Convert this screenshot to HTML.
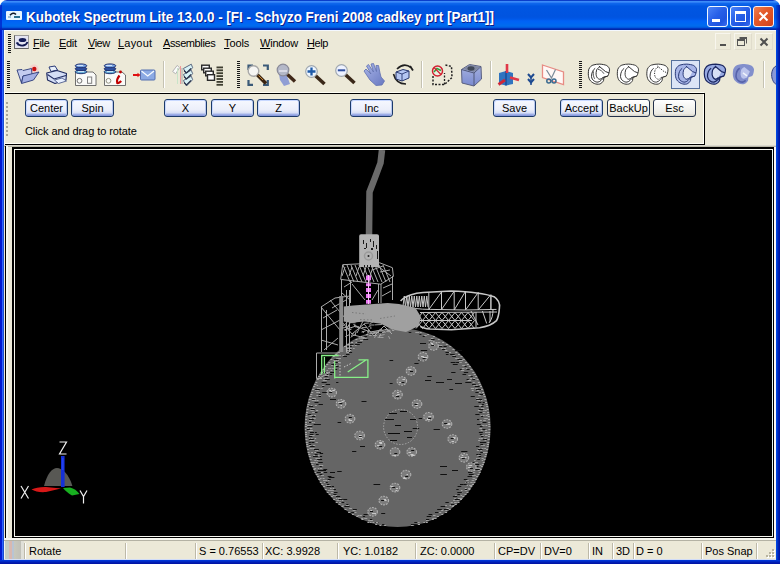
<!DOCTYPE html>
<html><head><meta charset="utf-8">
<style>
*{margin:0;padding:0;box-sizing:border-box}
html,body{width:780px;height:564px;overflow:hidden;background:#fff}
body{position:relative;font-family:"Liberation Sans",sans-serif;font-size:11px;color:#000}
.a{position:absolute}
#title{left:0;top:0;width:780px;height:30px;border-radius:7px 7px 0 0;
background:linear-gradient(to bottom,#0A3ECB 0px,#0A3ECB 1px,#3B8CF8 1px,#3B8CF8 2px,#2C7DF5 2px,#2C7DF5 3px,#1268EC 3px,#0660E8 5px,#0056E2 6px,#0054E0 17px,#0058E8 19px,#0062F6 21px,#0066F4 23px,#006CEE 26px,#0060E4 27px,#0050D8 28px,#0036C0 28px,#0036C0 29px,#0028A8 29px,#0028A8 30px)}
#ttext{left:26px;top:9px;color:#fff;font-weight:bold;font-size:14px;transform:scaleX(0.961);transform-origin:0 0;white-space:nowrap;text-shadow:1px 1px 0 #0A1E8A;line-height:16px}
#fl{left:0;top:30px;width:4px;height:534px;background:linear-gradient(to right,#0019D0 0,#0019D0 2px,#2D64FF 2px,#2D64FF 3px,#1A4CD0 3px)}
#fr{left:776px;top:30px;width:4px;height:534px;background:linear-gradient(to right,#0048E8 0,#0040D8 1px,#0028B8 2px,#0010A0 4px)}
#fb{left:0;top:560px;width:780px;height:4px;background:linear-gradient(to bottom,#0038D8 0,#0030D0 1px,#0020B8 2px,#0010A0 4px)}
#client{left:4px;top:30px;width:772px;height:530px;background:#ECE9D8}
.grip{background:repeating-linear-gradient(to bottom,#1a1a1a 0,#1a1a1a 1px,transparent 1px,transparent 2px)}
.mi{top:37px;line-height:13px;white-space:nowrap}
.mi u{text-decoration:underline;text-decoration-thickness:1px;text-underline-offset:1px}
.btn{height:18px;width:43px;border:1px solid #1C3A6A;border-radius:3px;text-align:center;line-height:16px;
background:linear-gradient(to bottom,#F6F8FF 0,#ECEFFA 60%,#D8DFF6 80%,#9FB0E8 90%,#8090D8 100%);box-shadow:inset 1px 1px 0 #C8D8FF,inset -1px 0 0 #B8C8F0}
.btn.p{background:linear-gradient(to bottom,#FFFFFF 0,#F4F4F0 50%,#ECEBE4 85%,#D8D4C8 100%);box-shadow:none;border-color:#22304A}
.sb{top:545px;line-height:13px;white-space:nowrap}
.sep{top:543px;width:2px;height:16px;background:linear-gradient(to right,#BDB9A8 0,#BDB9A8 1px,#FFFFFF 1px)}
</style></head><body>
<div id="title" class="a"></div>
<div id="ttext" class="a">Kubotek Spectrum Lite 13.0.0 - [FI - Schyzo Freni 2008 cadkey prt [Part1]]</div>

<!-- title icon -->
<svg class="a" style="left:6px;top:11px" width="16" height="9" viewBox="0 0 16 9">
<rect x="0" y="0" width="16" height="9" rx="1" fill="#E8F6FF"/>
<path d="M4 4.2Q7 0.8 10 3.5" stroke="#101828" stroke-width="1.6" fill="none"/>
<rect x="8" y="5" width="6" height="2" fill="#2A7090"/>
<rect x="2" y="5.5" width="3" height="1" fill="#5A90B0"/>
</svg>
<!-- title buttons -->
<div class="a" style="left:707px;top:6px;width:21px;height:21px;border:1px solid #F0F8FF;border-radius:3px;background:linear-gradient(135deg,#4C84F8 0%,#2860E8 45%,#1F55E0 75%,#3A6CF0 100%)"></div>
<div class="a" style="left:712px;top:19px;width:8px;height:3px;background:#fff"></div>
<div class="a" style="left:730px;top:6px;width:21px;height:21px;border:1px solid #F0F8FF;border-radius:3px;background:linear-gradient(135deg,#4C84F8 0%,#2860E8 45%,#1F55E0 75%,#3A6CF0 100%)"></div>
<div class="a" style="left:735px;top:11px;width:11px;height:11px;border:1px solid #fff;border-top-width:3px"></div>
<div class="a" style="left:753px;top:6px;width:21px;height:21px;border:1px solid #F8F0F0;border-radius:3px;background:linear-gradient(135deg,#F08050 0%,#E45A2A 40%,#D84A20 80%,#C84020 100%)"></div>
<svg class="a" style="left:758px;top:11px" width="11" height="11" viewBox="0 0 11 11">
<path d="M1.5 1.5L9.5 9.5M9.5 1.5L1.5 9.5" stroke="#FFF" stroke-width="2"/>
</svg>
<div class="a" style="left:0;top:5px;width:2px;height:25px;background:#0020C8;opacity:0.7"></div>
<div class="a" style="left:776px;top:5px;width:4px;height:25px;background:linear-gradient(to right,rgba(0,40,200,0.3),rgba(0,16,160,0.85))"></div>
<div id="fl" class="a"></div><div id="fr" class="a"></div><div id="fb" class="a"></div>
<div id="client" class="a"></div>

<!-- client top highlight -->
<div class="a" style="left:4px;top:30px;width:772px;height:1px;background:#F4F8FF"></div>
<!-- menu grip -->
<div class="a grip" style="left:8px;top:34px;width:3px;height:19px"></div>
<!-- menu icon -->
<svg class="a" style="left:14px;top:35px" width="15" height="14" viewBox="0 0 15 14">
<rect x="0.5" y="0.5" width="14" height="13" fill="#E4E4F2" stroke="#9A9A9A"/>
<path d="M0.5 0.5V13.5H14.5" fill="none" stroke="#606060"/>
<ellipse cx="8.5" cy="5" rx="3.8" ry="2" fill="#141C58"/>
<path d="M2.5 7.5Q5 11 9 10.5Q12.5 10 13.5 7" fill="none" stroke="#101850" stroke-width="1.8"/>
<path d="M3 9.5L4.5 10.5M3.5 7.5L5 8.5" stroke="#303870" stroke-width="1"/>
</svg>
<div class="a mi" style="left:33px;letter-spacing:-0.3px"><u>F</u>ile</div>
<div class="a mi" style="left:59px;letter-spacing:-0.3px"><u>E</u>dit</div>
<div class="a mi" style="left:88px;letter-spacing:-0.5px"><u>V</u>iew</div>
<div class="a mi" style="left:118px;letter-spacing:0.2px"><u>L</u>ayout</div>
<div class="a mi" style="left:163px;letter-spacing:-0.4px"><u>A</u>ssemblies</div>
<div class="a mi" style="left:224px;letter-spacing:-0.1px"><u>T</u>ools</div>
<div class="a mi" style="left:260px;letter-spacing:-0.2px"><u>W</u>indow</div>
<div class="a mi" style="left:307px;letter-spacing:-0.4px"><u>H</u>elp</div>
<!-- MDI buttons -->
<div class="a" style="left:715px;top:33px;width:16px;height:17px;border:1px solid #F8F6EE;border-right-color:#E0DCCC;border-bottom-color:#E0DCCC"></div>
<div class="a" style="left:734px;top:33px;width:18px;height:17px;border:1px solid #F8F6EE;border-right-color:#E0DCCC;border-bottom-color:#E0DCCC"></div>
<div class="a" style="left:755px;top:33px;width:18px;height:17px;border:1px solid #F8F6EE;border-right-color:#E0DCCC;border-bottom-color:#E0DCCC"></div>
<div class="a" style="left:720px;top:44px;width:6px;height:2px;background:#505050"></div>
<svg class="a" style="left:737px;top:36px" width="11" height="11" viewBox="0 0 11 11">
<path d="M3 1.5H9.5V7.5M3 1V3" stroke="#555" stroke-width="1" fill="none"/>
<rect x="0.5" y="3.5" width="7" height="6" fill="none" stroke="#555" stroke-width="1"/>
<rect x="0.5" y="3" width="7" height="2" fill="#555"/>
<rect x="3" y="1" width="7" height="2" fill="#555"/>
</svg>
<svg class="a" style="left:759px;top:37px" width="10" height="10" viewBox="0 0 10 10">
<path d="M1.5 1.5L8.5 8.5M8.5 1.5L1.5 8.5" stroke="#505050" stroke-width="2"/>
</svg>
<svg class="a" style="left:0;top:56px" width="780" height="37" viewBox="0 56 780 37">
<defs>
<radialGradient id="rg1"><stop offset="0" stop-color="#C00000"/><stop offset="0.5" stop-color="#E04040"/><stop offset="1" stop-color="#F8C0C0" stop-opacity="0"/></radialGradient>
<linearGradient id="hand" x1="0" y1="0" x2="1" y2="1"><stop offset="0" stop-color="#A8B4E8"/><stop offset="1" stop-color="#6878C0"/></linearGradient>
<linearGradient id="cube" x1="0" y1="0" x2="0" y2="1"><stop offset="0" stop-color="#A8B4E0"/><stop offset="1" stop-color="#7A8AD0"/></linearGradient>
</defs>
<!-- folder -->
<circle cx="34" cy="69" r="4.5" fill="#F8C8C8" opacity="0.7"/><circle cx="34.3" cy="69" r="2.2" fill="#C81010"/>
<path d="M17 70L22 69.5L23 70.5L31.5 68.5L32 75L23 76L21.5 83Z" fill="#C4CCF0" stroke="#2A3A78" stroke-width="0.9" stroke-linejoin="round"/>
<path d="M23 76L39 72L33.5 80L21.5 83.5Z" fill="#A4B0E4" stroke="#2A3A78" stroke-width="0.9" stroke-linejoin="round"/>
<!-- printer -->
<path d="M49 67L55 66L57.5 70L51 71.5Z" fill="#E8F0FA" stroke="#2A3A78" stroke-width="1"/>
<path d="M46.7 73L57 70.5L66.5 73.5L66 80L55 83.5L47.5 80Z" fill="#D4DEF6" stroke="#1E2A60" stroke-width="1.1" stroke-linejoin="round"/>
<path d="M47.5 74.5L54 79L66 75.5" fill="none" stroke="#1E2A60" stroke-width="1.1"/>
<path d="M54.5 80L62 78L66.5 81L58.5 83.5Z" fill="#E8F0FF" stroke="#3A4A80" stroke-width="0.8"/>
<!-- doc db 1 -->
<path d="M75.5 85.5V72H93L96 75V85.5Z" fill="#FAFAF8" stroke="#606060" stroke-width="0.9"/>
<g stroke="#182868" stroke-width="0.9"><ellipse cx="81" cy="71.8" rx="5.8" ry="1.9" fill="#6AB0D8"/><ellipse cx="81" cy="68.8" rx="5.8" ry="1.9" fill="#2E50A0"/><ellipse cx="81" cy="65.8" rx="5.8" ry="1.9" fill="#78A4E4"/></g>
<path d="M77 65.5H83M78 71.5H84" stroke="#E8F4FF" stroke-width="0.8"/>
<circle cx="79.5" cy="80.8" r="2.4" fill="none" stroke="#707070" stroke-width="1"/>
<rect x="87.5" y="77" width="4.2" height="6.3" fill="none" stroke="#808080" stroke-width="1"/>
<!-- doc db 2 -->
<path d="M104.5 85.5V72H122L125.5 75V85.5Z" fill="#FAFAF8" stroke="#606060" stroke-width="0.9"/>
<g stroke="#182868" stroke-width="0.9"><ellipse cx="110" cy="71.8" rx="5.8" ry="1.9" fill="#6AB0D8"/><ellipse cx="110" cy="68.8" rx="5.8" ry="1.9" fill="#2E50A0"/><ellipse cx="110" cy="65.8" rx="5.8" ry="1.9" fill="#78A4E4"/></g>
<path d="M106 65.5H112M107 71.5H113" stroke="#E8F4FF" stroke-width="0.8"/>
<circle cx="108.5" cy="80.8" r="2.4" fill="none" stroke="#909080" stroke-width="1"/>
<circle cx="120.5" cy="72" r="1.4" fill="#C00000"/>
<path d="M119.5 75.5Q116 80 117.3 83Q119 83.5 121.2 81" fill="none" stroke="#C00000" stroke-width="2.2"/>
<!-- mail -->
<rect x="140.5" y="70" width="14.5" height="10" rx="1" fill="#8CAAE4" stroke="#5470B0" stroke-width="1"/>
<path d="M141.5 71L147.7 76L154 71" fill="none" stroke="#F8FCFF" stroke-width="1.2"/>
<path d="M133 75H138" stroke="#E01010" stroke-width="2"/>
<path d="M137.5 72.8L140.5 75L137.5 77.2Z" fill="#E01010"/>
<!-- checklist -->
<path d="M172.6 71.5L177.2 65.4L179.5 67.7L175.7 73.8Z" fill="#FAFAFA" stroke="#B4B4B4" stroke-width="1"/>
<path d="M177.5 68V84" stroke="#C8E4C8" stroke-width="1"/>
<path d="M180.5 66V84" stroke="#F09898" stroke-width="1"/>
<path d="M182 68V84" stroke="#A8A8A8" stroke-width="1"/>
<g fill="#D8F2F6" stroke="#5A6880" stroke-width="1" stroke-linejoin="round">
<path d="M183.4 68.5L191.3 64.2L192.6 67.7L186.5 74.2Z"/><path d="M183.4 74.5L191.3 70.2L192.6 73.7L186.5 80.2Z"/><path d="M183.4 80.5L191.3 76.2L192.6 79.7L186.5 86Z"/>
</g>
<path d="M184 70.5L186.5 73L191 68.5M184 76.5L186.5 79L191 74.5M184 82.5L186.5 85L191 80.5" fill="none" stroke="#283048" stroke-width="1.2"/>
<!-- layers -->
<g fill="#FCFCFC" stroke="#2A2A2A" stroke-width="1.4">
<rect x="201.7" y="65.2" width="7.6" height="4.6"/><rect x="203.7" y="68.2" width="7.6" height="4.6"/><rect x="205.7" y="71.2" width="7.6" height="4.6"/><rect x="207.5" y="74.7" width="7" height="5.6"/>
</g>
<g fill="#3E3E30"><rect x="216.5" y="66.5" width="6.5" height="1.8"/><rect x="216.5" y="69.4" width="6.5" height="1.8"/><rect x="216.5" y="72.3" width="6.5" height="1.8"/><rect x="216.5" y="75.2" width="6.5" height="1.8"/><rect x="216.5" y="78.1" width="6.5" height="1.8"/><rect x="216.5" y="81" width="6.5" height="1.8"/><rect x="216.5" y="83.9" width="6.5" height="1.8"/></g>
<!-- zoom window -->
<path d="M248.5 70V65.5H253M263 65.5H267.8V70M248.5 80V84.8H253M263 84.8H267.8V80" fill="none" stroke="#3A5A78" stroke-width="2.2"/>
<circle cx="253.5" cy="71" r="5.3" fill="#F6F6F4" stroke="#A8A8A8" stroke-width="1.4"/>
<path d="M257.5 75L266 83.5" stroke="#3A2410" stroke-width="3.6"/>
<path d="M258.5 75.5L263 80" stroke="#C88838" stroke-width="1"/>
<!-- zoom dyn -->
<path d="M279 74L286 73L290 84L284 86L280 80Z" fill="#8090D4" opacity="0.85"/>
<circle cx="283" cy="70" r="5.8" fill="#B4B8C8" stroke="#8A8A98" stroke-width="1.2"/>
<path d="M279 71H287" stroke="#F0F0F8" stroke-width="1.2"/>
<path d="M287.5 74.5L295 81.5" stroke="#402818" stroke-width="3.4"/>
<!-- zoom in -->
<circle cx="311.5" cy="71.5" r="5.8" fill="#EEF6FF" stroke="#A0A8B0" stroke-width="1.2"/>
<path d="M311.5 67.5V75.5M307.5 71.5H315.5" stroke="#1E5AA8" stroke-width="2.3"/>
<path d="M315.8 76L324.5 84" stroke="#3A2818" stroke-width="3.6"/>
<!-- zoom out -->
<circle cx="341.5" cy="70.5" r="5.8" fill="#EEF2FF" stroke="#A0A8B0" stroke-width="1.2"/>
<path d="M337.8 70.3H345.2" stroke="#3050A0" stroke-width="2"/>
<path d="M345.8 75L354.5 83" stroke="#3A2818" stroke-width="3.6"/>
<!-- hand -->
<path d="M364 71L366 69L371 74L366.5 66L368.5 64.5L373.5 72L371 64L373.5 63.5L376.5 71.5L376 65.5L378.5 65.5L380 73L381 77L384.5 81L382 85L376 85.5L370 80Z" fill="url(#hand)" stroke="#6070B0" stroke-width="0.8" stroke-linejoin="round"/>
<!-- rotate box -->
<path d="M397 69Q404 62 411 67.5" fill="none" stroke="#202020" stroke-width="1.6"/>
<path d="M410 66L413 70.5" stroke="#202020" stroke-width="1.8"/>
<path d="M393.5 74Q396 84 406 84" fill="none" stroke="#202020" stroke-width="1.6"/>
<path d="M396 72L403 69.5L409 71L409 78L402 81L396 79Z" fill="#B4C6F2" stroke="#283870" stroke-width="1"/>
<path d="M396 72L402 74L409 71M402 74V81" fill="none" stroke="#283870" stroke-width="0.9"/>
<!-- hidden box -->
<path d="M433 76V84.5H444.5L452 77.5L451.5 66.5L445 65" fill="none" stroke="#202020" stroke-width="1.5" stroke-dasharray="2 1.5"/>
<path d="M444.5 84.5V73" fill="none" stroke="#202020" stroke-width="1.3" stroke-dasharray="2 1.5"/>
<circle cx="437.5" cy="71" r="5" fill="#E8F0E0" stroke="#D02030" stroke-width="1.5"/>
<path d="M434 72L437 68.5L441 70.5" fill="none" stroke="#30A040" stroke-width="1.5"/>
<path d="M434 67.5L441 74.5" stroke="#D02030" stroke-width="1.3"/>
<!-- shaded box -->
<path d="M461.5 69.5L469.5 64.5L481 66.5L481.5 79L474 86L462 83Z" fill="url(#cube)" stroke="#5A6080" stroke-width="1"/>
<path d="M461.5 69.5L474 73L481 66.5M474 73V86" fill="none" stroke="#505878" stroke-width="1"/>
<path d="M463 69L470 65L480 67L474 72Z" fill="#8088A0"/>
<ellipse cx="471" cy="68.5" rx="3.5" ry="2.2" fill="#404858"/>
<!-- axes -->
<path d="M499 73L506 71L513 73V84L506 85.5L499 84Z" fill="#3074C0"/>
<path d="M506 71V85.5" stroke="#1A4E9A" stroke-width="1.5"/>
<path d="M507 64V73" stroke="#E03848" stroke-width="2.6"/>
<path d="M510 77.5L519 80" stroke="#E03848" stroke-width="2.6"/>
<path d="M505 80L498.5 84.5" stroke="#D02838" stroke-width="2.8"/>
<!-- small arrow -->
<path d="M528 74L531 77.5L534 74M528 79L531 82.5L534 79" fill="none" stroke="#1E4A90" stroke-width="2"/>
<path d="M531 76V85" stroke="#1E4A90" stroke-width="1.5"/>
<!-- plane -->
<path d="M542.5 65L563.5 72V84.5L542.5 77.5Z" fill="#FFF8F6" stroke="#E88C84" stroke-width="1.3"/>
<path d="M546.5 70L551.5 78L555.5 69.5" fill="none" stroke="#7A8A98" stroke-width="1.2"/>
<circle cx="548.8" cy="81" r="2" fill="none" stroke="#3A6A90" stroke-width="1.5"/>
<circle cx="554" cy="81" r="2" fill="none" stroke="#3A6A90" stroke-width="1.5"/>
<!-- torus icons -->
<g transform="translate(588.5,64.8)" stroke="#303030" stroke-width="1"><path d="M0.3 4.4C1.5 2 3 0.8 4.4 0.3C7 -0.5 9 -0.7 11.3 -0.7C14 -0.5 16.5 0 18.2 0.7C19.8 1.8 20.7 3 21 4.4C21 6 20.8 7 20.5 8.1C20.2 9.5 19.8 10.5 19.2 11.3L15.5 12.5L15 15.9C14 17.5 12.8 18.7 11.3 19.2C9.5 19.6 7.5 19.4 5.8 18.7C3.8 17.8 2.2 16.5 1.2 15C0.2 13 -0.2 11 -0.2 9C-0.2 7.3 0 5.8 0.3 4.4Z" fill="#FFFFFF"/><path d="M6.7 3.5C4.5 4.8 3 8 3 11.8C3.3 13.8 4 15 5.3 15.9C6.5 17 8 17.4 9.5 17.3C10.8 17 11.8 16.3 12.7 15.5" fill="none"/><path d="M11.3 2.1C9.5 3 8.5 4.2 8.1 5.3C7.6 7 7.5 8.5 7.6 9.9C7.9 11.5 8.3 12.5 9 13.2C9.7 14 10.5 14.4 11.3 14.5C12.5 14.3 13.3 13.6 14.1 12.7" fill="none"/><path d="M10.4 1.2L16.9 6.7L20.5 8.1M14.1 12.7L19.2 11.3M12.7 15.5L15.5 12.5" fill="none"/><path d="M5 6.5C4.5 9 4.8 12 6.2 14M9.5 4.5C12 5 14 6.5 15.5 9" fill="none" stroke-width="0.8"/></g>
<g transform="translate(617.5,64.8)" stroke="#383838" stroke-width="1"><path d="M0.3 4.4C1.5 2 3 0.8 4.4 0.3C7 -0.5 9 -0.7 11.3 -0.7C14 -0.5 16.5 0 18.2 0.7C19.8 1.8 20.7 3 21 4.4C21 6 20.8 7 20.5 8.1C20.2 9.5 19.8 10.5 19.2 11.3L15.5 12.5L15 15.9C14 17.5 12.8 18.7 11.3 19.2C9.5 19.6 7.5 19.4 5.8 18.7C3.8 17.8 2.2 16.5 1.2 15C0.2 13 -0.2 11 -0.2 9C-0.2 7.3 0 5.8 0.3 4.4Z" fill="#FFFFFF"/><path d="M6.7 3.5C4.5 4.8 3 8 3 11.8C3.3 13.8 4 15 5.3 15.9C6.5 17 8 17.4 9.5 17.3C10.8 17 11.8 16.3 12.7 15.5" fill="none"/><path d="M11.3 2.1C9.5 3 8.5 4.2 8.1 5.3C7.6 7 7.5 8.5 7.6 9.9C7.9 11.5 8.3 12.5 9 13.2C9.7 14 10.5 14.4 11.3 14.5C12.5 14.3 13.3 13.6 14.1 12.7" fill="none"/><path d="M10.4 1.2L16.9 6.7L20.5 8.1M14.1 12.7L19.2 11.3M12.7 15.5L15.5 12.5" fill="none"/></g>
<g transform="translate(647,64.8)" stroke="#383838" stroke-width="1"><path d="M0.3 4.4C1.5 2 3 0.8 4.4 0.3C7 -0.5 9 -0.7 11.3 -0.7C14 -0.5 16.5 0 18.2 0.7C19.8 1.8 20.7 3 21 4.4C21 6 20.8 7 20.5 8.1C20.2 9.5 19.8 10.5 19.2 11.3L15.5 12.5L15 15.9C14 17.5 12.8 18.7 11.3 19.2C9.5 19.6 7.5 19.4 5.8 18.7C3.8 17.8 2.2 16.5 1.2 15C0.2 13 -0.2 11 -0.2 9C-0.2 7.3 0 5.8 0.3 4.4Z" fill="#FFFFFF"/><path d="M6.7 3.5C4.5 4.8 3 8 3 11.8C3.3 13.8 4 15 5.3 15.9C6.5 17 8 17.4 9.5 17.3C10.8 17 11.8 16.3 12.7 15.5" fill="none"/><path d="M11.3 2.1C9.5 3 8.5 4.2 8.1 5.3C7.6 7 7.5 8.5 7.6 9.9C7.9 11.5 8.3 12.5 9 13.2C9.7 14 10.5 14.4 11.3 14.5C12.5 14.3 13.3 13.6 14.1 12.7" fill="none" stroke-dasharray="1.3 1.1"/><path d="M10.4 1.2L16.9 6.7L20.5 8.1M14.1 12.7L19.2 11.3M12.7 15.5L15.5 12.5" fill="none" stroke-dasharray="1.3 1.1"/></g>
<rect x="671.5" y="60.5" width="28" height="28" fill="#DCE5F6" stroke="#56709C" stroke-width="1"/>
<g transform="translate(675.5,64.8)" stroke="#2A3A78" stroke-width="1"><path d="M0.3 4.4C1.5 2 3 0.8 4.4 0.3C7 -0.5 9 -0.7 11.3 -0.7C14 -0.5 16.5 0 18.2 0.7C19.8 1.8 20.7 3 21 4.4C21 6 20.8 7 20.5 8.1C20.2 9.5 19.8 10.5 19.2 11.3L15.5 12.5L15 15.9C14 17.5 12.8 18.7 11.3 19.2C9.5 19.6 7.5 19.4 5.8 18.7C3.8 17.8 2.2 16.5 1.2 15C0.2 13 -0.2 11 -0.2 9C-0.2 7.3 0 5.8 0.3 4.4Z" fill="#A8B6E8"/><path d="M8.1 5.3C7.6 7 7.5 8.5 7.6 9.9C7.9 11.5 8.3 12.5 9 13.2C10 14.3 12 14 14.1 12.7L16.9 6.7L11.3 2.1C9.5 3 8.5 4.2 8.1 5.3Z" fill="#E4EAF8" stroke="none"/><path d="M6.7 3.5C4.5 4.8 3 8 3 11.8C3.3 13.8 4 15 5.3 15.9C6.5 17 8 17.4 9.5 17.3C10.8 17 11.8 16.3 12.7 15.5" fill="none"/><path d="M11.3 2.1C9.5 3 8.5 4.2 8.1 5.3C7.6 7 7.5 8.5 7.6 9.9C7.9 11.5 8.3 12.5 9 13.2C9.7 14 10.5 14.4 11.3 14.5C12.5 14.3 13.3 13.6 14.1 12.7" fill="none"/><path d="M10.4 1.2L16.9 6.7L20.5 8.1M14.1 12.7L19.2 11.3M12.7 15.5L15.5 12.5" fill="none"/></g>
<g transform="translate(704.5,64.8)" stroke="#1A2660" stroke-width="1.2"><path d="M0.3 4.4C1.5 2 3 0.8 4.4 0.3C7 -0.5 9 -0.7 11.3 -0.7C14 -0.5 16.5 0 18.2 0.7C19.8 1.8 20.7 3 21 4.4C21 6 20.8 7 20.5 8.1C20.2 9.5 19.8 10.5 19.2 11.3L15.5 12.5L15 15.9C14 17.5 12.8 18.7 11.3 19.2C9.5 19.6 7.5 19.4 5.8 18.7C3.8 17.8 2.2 16.5 1.2 15C0.2 13 -0.2 11 -0.2 9C-0.2 7.3 0 5.8 0.3 4.4Z" fill="#98AAE2"/><path d="M8.1 5.3C7.6 7 7.5 8.5 7.6 9.9C7.9 11.5 8.3 12.5 9 13.2C10 14.3 12 14 14.1 12.7L16.9 6.7L11.3 2.1C9.5 3 8.5 4.2 8.1 5.3Z" fill="#D8E0F6" stroke="none"/><path d="M6.7 3.5C4.5 4.8 3 8 3 11.8C3.3 13.8 4 15 5.3 15.9C6.5 17 8 17.4 9.5 17.3C10.8 17 11.8 16.3 12.7 15.5" fill="none"/><path d="M11.3 2.1C9.5 3 8.5 4.2 8.1 5.3C7.6 7 7.5 8.5 7.6 9.9C7.9 11.5 8.3 12.5 9 13.2C9.7 14 10.5 14.4 11.3 14.5C12.5 14.3 13.3 13.6 14.1 12.7" fill="none"/><path d="M10.4 1.2L16.9 6.7L20.5 8.1M14.1 12.7L19.2 11.3M12.7 15.5L15.5 12.5" fill="none"/></g>
<g transform="translate(733,64.8)" opacity="0.92"><path d="M0.3 4.4C1.5 2 3 0.8 4.4 0.3C7 -0.5 9 -0.7 11.3 -0.7C14 -0.5 16.5 0 18.2 0.7C19.8 1.8 20.7 3 21 4.4C21 6 20.8 7 20.5 8.1C20.2 9.5 19.8 10.5 19.2 11.3L15.5 12.5L15 15.9C14 17.5 12.8 18.7 11.3 19.2C9.5 19.6 7.5 19.4 5.8 18.7C3.8 17.8 2.2 16.5 1.2 15C0.2 13 -0.2 11 -0.2 9C-0.2 7.3 0 5.8 0.3 4.4Z" fill="#7A88CC"/><path d="M6.7 3.5C4.5 4.8 3 8 3 11.8C3.3 13.8 4 15 5.3 15.9C6.5 17 8 17.4 9.5 17.3C10.8 17 11.8 16.3 12.7 15.5" fill="none" stroke="#4A58A8" stroke-width="1.6"/><path d="M8.1 5.3C7.6 7 7.5 8.5 7.6 9.9C7.9 11.5 8.3 12.5 9 13.2C10 14.3 12 14 14.1 12.7L16.9 6.7L11.3 2.1C9.5 3 8.5 4.2 8.1 5.3Z" fill="#B8C2EE"/><path d="M10 8L14 11" stroke="#F0F4FF" stroke-width="1.5"/></g>
<path d="M776 66C772 68 771 74 772 78C773 82 775 84 776 84" fill="#8898D8" stroke="#304080" stroke-width="1"/>
</svg>

<!-- toolbar grip -->
<div class="a grip" style="left:7px;top:61px;width:3px;height:27px"></div>
<!-- toolbar separators -->
<div class="a" style="left:163px;top:61px;width:1px;height:27px;background:#C5C2B2"></div>
<div class="a" style="left:164px;top:61px;width:1px;height:27px;background:#FFFFFF"></div>
<div class="a grip" style="left:237px;top:61px;width:3px;height:27px"></div>
<div class="a" style="left:421px;top:61px;width:1px;height:27px;background:#C5C2B2"></div>
<div class="a" style="left:422px;top:61px;width:1px;height:27px;background:#FFFFFF"></div>
<div class="a" style="left:490px;top:61px;width:1px;height:27px;background:#C5C2B2"></div>
<div class="a" style="left:491px;top:61px;width:1px;height:27px;background:#FFFFFF"></div>
<div class="a grip" style="left:579px;top:61px;width:3px;height:27px"></div>
<div class="a" style="left:763px;top:61px;width:1px;height:27px;background:#C5C2B2"></div>
<div class="a" style="left:764px;top:61px;width:1px;height:27px;background:#FFFFFF"></div>
<!-- dialog bar -->
<div class="a" style="left:4px;top:92px;width:700px;height:1px;background:#FFFFF6"></div>
<div class="a" style="left:4px;top:93px;width:701px;height:52px;border:1px solid #000;border-left:none;border-bottom:1px solid #000"></div>
<div class="a" style="left:4px;top:94px;width:700px;height:50px;border-right:1px solid #FFFFF8;border-bottom:1px solid #FFFFF8"></div>
<div class="a" style="left:6px;top:102px;width:2px;height:34px;background:repeating-linear-gradient(to bottom,#A8A698 0,#A8A698 2px,transparent 2px,transparent 4px)"></div>
<div class="a" style="left:4px;top:31px;width:1px;height:114px;background:#FAFAF6"></div>
<div class="a btn" style="left:25px;top:99px">Center</div>
<div class="a btn" style="left:71px;top:99px">Spin</div>
<div class="a btn" style="left:164px;top:99px">X</div>
<div class="a btn" style="left:211px;top:99px">Y</div>
<div class="a btn" style="left:257px;top:99px">Z</div>
<div class="a btn" style="left:350px;top:99px">Inc</div>
<div class="a btn" style="left:493px;top:99px">Save</div>
<div class="a btn" style="left:560px;top:99px">Accept</div>
<div class="a btn p" style="left:607px;top:99px">BackUp</div>
<div class="a btn p" style="left:653px;top:99px">Esc</div>
<div class="a" style="left:25px;top:124px;line-height:14px;white-space:nowrap;letter-spacing:-0.08px">Click and drag to rotate</div>
<!-- mdi area edges -->
<div class="a" style="left:4px;top:145px;width:772px;height:1px;background:#DAD8CE"></div>
<div class="a" style="left:4px;top:146px;width:772px;height:1px;background:#BAB8A8"></div>
<div class="a" style="left:5px;top:146px;width:1px;height:393px;background:#000"></div>
<div class="a" style="left:6px;top:146px;width:2px;height:393px;background:#F6FAF2"></div>
<!-- viewport -->
<div class="a" style="left:12px;top:147px;width:762px;height:391px;background:#000"></div>
<div class="a" style="left:14px;top:149px;width:759px;height:388px;border:1px solid #F6F6F0;border-right-color:#E8F8F8"></div>
<div class="a" style="left:774px;top:147px;width:2px;height:393px;background:#FCF6F4"></div>
<div class="a" style="left:4px;top:538px;width:772px;height:2px;background:#F8F8F2"></div>
<!--VP--><svg class="a" style="left:15px;top:150px" width="757" height="386" viewBox="15 150 757 386">
<ellipse cx="397.6" cy="427.5" rx="93" ry="99.5" fill="#656565"/>
<path d="M384.7 329.5h2.0" stroke="#A8A8A8" stroke-width="1"/>
<path d="M388.5 330.5h1.9" stroke="#A0A0A0" stroke-width="1"/>
<path d="M392.0 330.5h2.3" stroke="#A0A0A0" stroke-width="1"/>
<path d="M393.0 329.5h3.6" stroke="#121212" stroke-width="1"/>
<path d="M394.9 329.5h4.3" stroke="#121212" stroke-width="1"/>
<path d="M408.5 329.5h2.0" stroke="#A8A8A8" stroke-width="1"/>
<path d="M401.6 330.5h2.4" stroke="#A0A0A0" stroke-width="1"/>
<path d="M405.8 330.5h2.0" stroke="#A0A0A0" stroke-width="1"/>
<path d="M402.7 329.5h3.6" stroke="#121212" stroke-width="1"/>
<path d="M373.5 332.5h2.0" stroke="#A8A8A8" stroke-width="1"/>
<path d="M381.0 332.5h1.9" stroke="#A0A0A0" stroke-width="1"/>
<path d="M376.6 332.5h2.4" stroke="#A0A0A0" stroke-width="1"/>
<path d="M379.0 332.5h4.3" stroke="#121212" stroke-width="1"/>
<path d="M419.7 332.5h2.0" stroke="#A8A8A8" stroke-width="1"/>
<path d="M416.9 332.5h2.1" stroke="#A0A0A0" stroke-width="1"/>
<path d="M417.0 332.5h1.5" stroke="#A0A0A0" stroke-width="1"/>
<path d="M408.7 332.5h2.6" stroke="#121212" stroke-width="1"/>
<path d="M382.0 332.5h2.7" stroke="#9C9C9C" stroke-width="1"/>
<path d="M415.3 332.5h2.9" stroke="#9C9C9C" stroke-width="1"/>
<path d="M366.1 334.5h2.0" stroke="#A8A8A8" stroke-width="1"/>
<path d="M374.8 335.5h2.1" stroke="#A0A0A0" stroke-width="1"/>
<path d="M369.2 335.5h2.5" stroke="#A0A0A0" stroke-width="1"/>
<path d="M369.8 334.5h4.9" stroke="#121212" stroke-width="1"/>
<path d="M371.6 334.5h2.1" stroke="#121212" stroke-width="1"/>
<path d="M427.1 334.5h2.0" stroke="#A8A8A8" stroke-width="1"/>
<path d="M424.1 335.5h1.6" stroke="#A0A0A0" stroke-width="1"/>
<path d="M424.9 335.5h1.8" stroke="#A0A0A0" stroke-width="1"/>
<path d="M419.4 334.5h2.0" stroke="#121212" stroke-width="1"/>
<path d="M360.3 336.5h2.0" stroke="#A8A8A8" stroke-width="1"/>
<path d="M362.5 338.5h1.9" stroke="#A0A0A0" stroke-width="1"/>
<path d="M364.4 338.5h2.2" stroke="#A0A0A0" stroke-width="1"/>
<path d="M363.8 336.5h3.4" stroke="#121212" stroke-width="1"/>
<path d="M432.9 336.5h2.0" stroke="#A8A8A8" stroke-width="1"/>
<path d="M430.8 338.5h2.5" stroke="#A0A0A0" stroke-width="1"/>
<path d="M431.0 338.5h2.2" stroke="#A0A0A0" stroke-width="1"/>
<path d="M422.7 336.5h2.1" stroke="#121212" stroke-width="1"/>
<path d="M355.4 339.5h2.0" stroke="#A8A8A8" stroke-width="1"/>
<path d="M360.1 340.5h2.3" stroke="#A0A0A0" stroke-width="1"/>
<path d="M360.7 340.5h2.2" stroke="#A0A0A0" stroke-width="1"/>
<path d="M363.3 339.5h4.9" stroke="#121212" stroke-width="1"/>
<path d="M437.8 339.5h2.0" stroke="#A8A8A8" stroke-width="1"/>
<path d="M430.1 340.5h2.4" stroke="#A0A0A0" stroke-width="1"/>
<path d="M428.6 340.5h1.8" stroke="#A0A0A0" stroke-width="1"/>
<path d="M431.0 339.5h3.6" stroke="#121212" stroke-width="1"/>
<path d="M351.1 342.5h2.0" stroke="#A8A8A8" stroke-width="1"/>
<path d="M357.5 342.5h2.3" stroke="#A0A0A0" stroke-width="1"/>
<path d="M355.8 342.5h1.8" stroke="#A0A0A0" stroke-width="1"/>
<path d="M357.2 342.5h4.9" stroke="#121212" stroke-width="1"/>
<path d="M442.1 342.5h2.0" stroke="#A8A8A8" stroke-width="1"/>
<path d="M437.6 342.5h2.1" stroke="#A0A0A0" stroke-width="1"/>
<path d="M433.0 342.5h1.8" stroke="#A0A0A0" stroke-width="1"/>
<path d="M429.5 342.5h3.6" stroke="#121212" stroke-width="1"/>
<path d="M355.7 342.5h1.4" stroke="#9C9C9C" stroke-width="1"/>
<path d="M438.9 342.5h1.3" stroke="#9C9C9C" stroke-width="1"/>
<path d="M347.3 344.5h2.0" stroke="#A8A8A8" stroke-width="1"/>
<path d="M351.5 345.5h2.0" stroke="#A0A0A0" stroke-width="1"/>
<path d="M354.8 345.5h1.6" stroke="#A0A0A0" stroke-width="1"/>
<path d="M355.0 344.5h4.8" stroke="#121212" stroke-width="1"/>
<path d="M349.3 344.5h4.2" stroke="#121212" stroke-width="1"/>
<path d="M445.9 344.5h2.0" stroke="#A8A8A8" stroke-width="1"/>
<path d="M437.6 345.5h2.0" stroke="#A0A0A0" stroke-width="1"/>
<path d="M440.8 345.5h1.6" stroke="#A0A0A0" stroke-width="1"/>
<path d="M434.9 344.5h2.1" stroke="#121212" stroke-width="1"/>
<path d="M355.1 345.5h1.3" stroke="#9C9C9C" stroke-width="1"/>
<path d="M438.8 345.5h2.9" stroke="#9C9C9C" stroke-width="1"/>
<path d="M343.9 346.5h2.0" stroke="#A8A8A8" stroke-width="1"/>
<path d="M352.8 348.5h1.9" stroke="#A0A0A0" stroke-width="1"/>
<path d="M346.9 348.5h1.9" stroke="#A0A0A0" stroke-width="1"/>
<path d="M346.2 346.5h3.3" stroke="#121212" stroke-width="1"/>
<path d="M347.0 346.5h4.8" stroke="#121212" stroke-width="1"/>
<path d="M449.3 346.5h2.0" stroke="#A8A8A8" stroke-width="1"/>
<path d="M440.8 348.5h2.5" stroke="#A0A0A0" stroke-width="1"/>
<path d="M444.0 348.5h2.0" stroke="#A0A0A0" stroke-width="1"/>
<path d="M438.9 346.5h3.4" stroke="#121212" stroke-width="1"/>
<path d="M443.5 346.5h3.2" stroke="#121212" stroke-width="1"/>
<path d="M348.9 348.5h3.0" stroke="#9C9C9C" stroke-width="1"/>
<path d="M440.9 348.5h2.3" stroke="#9C9C9C" stroke-width="1"/>
<path d="M340.8 349.5h2.0" stroke="#A8A8A8" stroke-width="1"/>
<path d="M349.4 350.5h1.7" stroke="#A0A0A0" stroke-width="1"/>
<path d="M346.4 350.5h2.0" stroke="#A0A0A0" stroke-width="1"/>
<path d="M347.9 349.5h3.5" stroke="#121212" stroke-width="1"/>
<path d="M452.4 349.5h2.0" stroke="#A8A8A8" stroke-width="1"/>
<path d="M444.5 350.5h2.3" stroke="#A0A0A0" stroke-width="1"/>
<path d="M445.2 350.5h2.2" stroke="#A0A0A0" stroke-width="1"/>
<path d="M442.1 349.5h3.1" stroke="#121212" stroke-width="1"/>
<path d="M337.9 352.5h2.0" stroke="#A8A8A8" stroke-width="1"/>
<path d="M346.3 352.5h1.8" stroke="#A0A0A0" stroke-width="1"/>
<path d="M347.4 352.5h2.2" stroke="#A0A0A0" stroke-width="1"/>
<path d="M349.1 352.5h3.0" stroke="#121212" stroke-width="1"/>
<path d="M455.3 352.5h2.0" stroke="#A8A8A8" stroke-width="1"/>
<path d="M449.0 352.5h1.5" stroke="#A0A0A0" stroke-width="1"/>
<path d="M449.2 352.5h1.8" stroke="#A0A0A0" stroke-width="1"/>
<path d="M445.5 352.5h3.4" stroke="#121212" stroke-width="1"/>
<path d="M335.2 354.5h2.0" stroke="#A8A8A8" stroke-width="1"/>
<path d="M342.3 355.5h1.9" stroke="#A0A0A0" stroke-width="1"/>
<path d="M339.1 355.5h1.8" stroke="#A0A0A0" stroke-width="1"/>
<path d="M346.3 354.5h3.2" stroke="#121212" stroke-width="1"/>
<path d="M346.1 354.5h2.5" stroke="#121212" stroke-width="1"/>
<path d="M458.0 354.5h2.0" stroke="#A8A8A8" stroke-width="1"/>
<path d="M452.7 355.5h1.9" stroke="#A0A0A0" stroke-width="1"/>
<path d="M453.6 355.5h1.6" stroke="#A0A0A0" stroke-width="1"/>
<path d="M445.9 354.5h2.6" stroke="#121212" stroke-width="1"/>
<path d="M450.1 354.5h4.6" stroke="#121212" stroke-width="1"/>
<path d="M338.4 355.5h2.3" stroke="#9C9C9C" stroke-width="1"/>
<path d="M452.8 355.5h2.2" stroke="#9C9C9C" stroke-width="1"/>
<path d="M332.7 356.5h2.0" stroke="#A8A8A8" stroke-width="1"/>
<path d="M338.6 358.5h2.4" stroke="#A0A0A0" stroke-width="1"/>
<path d="M336.9 358.5h2.1" stroke="#A0A0A0" stroke-width="1"/>
<path d="M343.1 356.5h2.8" stroke="#121212" stroke-width="1"/>
<path d="M344.4 356.5h2.6" stroke="#121212" stroke-width="1"/>
<path d="M460.5 356.5h2.0" stroke="#A8A8A8" stroke-width="1"/>
<path d="M455.2 358.5h2.2" stroke="#A0A0A0" stroke-width="1"/>
<path d="M457.0 358.5h2.2" stroke="#A0A0A0" stroke-width="1"/>
<path d="M452.3 356.5h2.1" stroke="#121212" stroke-width="1"/>
<path d="M453.4 356.5h2.7" stroke="#121212" stroke-width="1"/>
<path d="M336.2 358.5h1.6" stroke="#9C9C9C" stroke-width="1"/>
<path d="M456.7 358.5h1.4" stroke="#9C9C9C" stroke-width="1"/>
<path d="M330.4 359.5h2.0" stroke="#A8A8A8" stroke-width="1"/>
<path d="M335.5 360.5h1.9" stroke="#A0A0A0" stroke-width="1"/>
<path d="M337.4 360.5h1.6" stroke="#A0A0A0" stroke-width="1"/>
<path d="M334.2 359.5h4.2" stroke="#121212" stroke-width="1"/>
<path d="M462.8 359.5h2.0" stroke="#A8A8A8" stroke-width="1"/>
<path d="M461.0 360.5h1.9" stroke="#A0A0A0" stroke-width="1"/>
<path d="M458.8 360.5h1.9" stroke="#A0A0A0" stroke-width="1"/>
<path d="M457.4 359.5h4.5" stroke="#121212" stroke-width="1"/>
<path d="M333.4 360.5h2.2" stroke="#9C9C9C" stroke-width="1"/>
<path d="M459.5 360.5h2.1" stroke="#9C9C9C" stroke-width="1"/>
<path d="M328.3 362.5h2.0" stroke="#A8A8A8" stroke-width="1"/>
<path d="M337.6 362.5h1.8" stroke="#A0A0A0" stroke-width="1"/>
<path d="M332.8 362.5h1.6" stroke="#A0A0A0" stroke-width="1"/>
<path d="M334.1 362.5h3.7" stroke="#121212" stroke-width="1"/>
<path d="M464.9 362.5h2.0" stroke="#A8A8A8" stroke-width="1"/>
<path d="M460.2 362.5h1.6" stroke="#A0A0A0" stroke-width="1"/>
<path d="M458.4 362.5h2.1" stroke="#A0A0A0" stroke-width="1"/>
<path d="M450.7 362.5h4.9" stroke="#121212" stroke-width="1"/>
<path d="M456.1 362.5h3.1" stroke="#121212" stroke-width="1"/>
<path d="M326.3 364.5h2.0" stroke="#A8A8A8" stroke-width="1"/>
<path d="M331.1 365.5h1.8" stroke="#A0A0A0" stroke-width="1"/>
<path d="M335.3 365.5h2.0" stroke="#A0A0A0" stroke-width="1"/>
<path d="M331.3 364.5h4.6" stroke="#121212" stroke-width="1"/>
<path d="M466.9 364.5h2.0" stroke="#A8A8A8" stroke-width="1"/>
<path d="M462.2 365.5h1.9" stroke="#A0A0A0" stroke-width="1"/>
<path d="M463.4 365.5h1.8" stroke="#A0A0A0" stroke-width="1"/>
<path d="M454.3 364.5h3.1" stroke="#121212" stroke-width="1"/>
<path d="M452.8 364.5h4.7" stroke="#121212" stroke-width="1"/>
<path d="M324.4 366.5h2.0" stroke="#A8A8A8" stroke-width="1"/>
<path d="M332.1 368.5h1.8" stroke="#A0A0A0" stroke-width="1"/>
<path d="M328.1 368.5h1.5" stroke="#A0A0A0" stroke-width="1"/>
<path d="M335.6 366.5h2.9" stroke="#121212" stroke-width="1"/>
<path d="M468.8 366.5h2.0" stroke="#A8A8A8" stroke-width="1"/>
<path d="M465.9 368.5h1.5" stroke="#A0A0A0" stroke-width="1"/>
<path d="M461.8 368.5h2.5" stroke="#A0A0A0" stroke-width="1"/>
<path d="M464.5 366.5h2.1" stroke="#121212" stroke-width="1"/>
<path d="M329.5 368.5h2.0" stroke="#9C9C9C" stroke-width="1"/>
<path d="M462.7 368.5h1.5" stroke="#9C9C9C" stroke-width="1"/>
<path d="M322.7 369.5h2.0" stroke="#A8A8A8" stroke-width="1"/>
<path d="M330.6 370.5h1.7" stroke="#A0A0A0" stroke-width="1"/>
<path d="M326.5 370.5h1.7" stroke="#A0A0A0" stroke-width="1"/>
<path d="M334.3 369.5h2.9" stroke="#121212" stroke-width="1"/>
<path d="M470.5 369.5h2.0" stroke="#A8A8A8" stroke-width="1"/>
<path d="M460.9 370.5h2.0" stroke="#A0A0A0" stroke-width="1"/>
<path d="M461.9 370.5h2.4" stroke="#A0A0A0" stroke-width="1"/>
<path d="M459.8 369.5h2.0" stroke="#121212" stroke-width="1"/>
<path d="M466.7 369.5h2.8" stroke="#121212" stroke-width="1"/>
<path d="M321.0 372.5h2.0" stroke="#A8A8A8" stroke-width="1"/>
<path d="M325.1 372.5h2.0" stroke="#A0A0A0" stroke-width="1"/>
<path d="M326.4 372.5h1.9" stroke="#A0A0A0" stroke-width="1"/>
<path d="M330.2 372.5h3.8" stroke="#121212" stroke-width="1"/>
<path d="M323.1 372.5h2.8" stroke="#121212" stroke-width="1"/>
<path d="M472.2 372.5h2.0" stroke="#A8A8A8" stroke-width="1"/>
<path d="M465.0 372.5h1.6" stroke="#A0A0A0" stroke-width="1"/>
<path d="M465.0 372.5h1.7" stroke="#A0A0A0" stroke-width="1"/>
<path d="M463.8 372.5h4.4" stroke="#121212" stroke-width="1"/>
<path d="M319.5 374.5h2.0" stroke="#A8A8A8" stroke-width="1"/>
<path d="M326.9 375.5h2.1" stroke="#A0A0A0" stroke-width="1"/>
<path d="M325.0 375.5h2.4" stroke="#A0A0A0" stroke-width="1"/>
<path d="M325.0 374.5h3.2" stroke="#121212" stroke-width="1"/>
<path d="M329.7 374.5h2.6" stroke="#121212" stroke-width="1"/>
<path d="M473.7 374.5h2.0" stroke="#A8A8A8" stroke-width="1"/>
<path d="M468.3 375.5h2.3" stroke="#A0A0A0" stroke-width="1"/>
<path d="M469.6 375.5h1.5" stroke="#A0A0A0" stroke-width="1"/>
<path d="M462.5 374.5h3.7" stroke="#121212" stroke-width="1"/>
<path d="M318.0 376.5h2.0" stroke="#A8A8A8" stroke-width="1"/>
<path d="M327.0 378.5h1.6" stroke="#A0A0A0" stroke-width="1"/>
<path d="M323.6 378.5h2.0" stroke="#A0A0A0" stroke-width="1"/>
<path d="M324.7 376.5h3.0" stroke="#121212" stroke-width="1"/>
<path d="M475.2 376.5h2.0" stroke="#A8A8A8" stroke-width="1"/>
<path d="M470.0 378.5h2.0" stroke="#A0A0A0" stroke-width="1"/>
<path d="M473.1 378.5h2.2" stroke="#A0A0A0" stroke-width="1"/>
<path d="M470.5 376.5h2.3" stroke="#121212" stroke-width="1"/>
<path d="M326.4 378.5h1.7" stroke="#9C9C9C" stroke-width="1"/>
<path d="M469.9 378.5h1.1" stroke="#9C9C9C" stroke-width="1"/>
<path d="M316.7 379.5h2.0" stroke="#A8A8A8" stroke-width="1"/>
<path d="M324.0 380.5h1.5" stroke="#A0A0A0" stroke-width="1"/>
<path d="M325.1 380.5h1.7" stroke="#A0A0A0" stroke-width="1"/>
<path d="M324.9 379.5h4.9" stroke="#121212" stroke-width="1"/>
<path d="M476.5 379.5h2.0" stroke="#A8A8A8" stroke-width="1"/>
<path d="M467.6 380.5h2.5" stroke="#A0A0A0" stroke-width="1"/>
<path d="M469.2 380.5h1.9" stroke="#A0A0A0" stroke-width="1"/>
<path d="M472.4 379.5h2.6" stroke="#121212" stroke-width="1"/>
<path d="M466.6 379.5h2.2" stroke="#121212" stroke-width="1"/>
<path d="M322.7 380.5h2.3" stroke="#9C9C9C" stroke-width="1"/>
<path d="M469.3 380.5h1.6" stroke="#9C9C9C" stroke-width="1"/>
<path d="M315.4 382.5h2.0" stroke="#A8A8A8" stroke-width="1"/>
<path d="M321.7 382.5h2.2" stroke="#A0A0A0" stroke-width="1"/>
<path d="M324.2 382.5h1.6" stroke="#A0A0A0" stroke-width="1"/>
<path d="M321.5 382.5h2.9" stroke="#121212" stroke-width="1"/>
<path d="M323.1 382.5h3.5" stroke="#121212" stroke-width="1"/>
<path d="M477.8 382.5h2.0" stroke="#A8A8A8" stroke-width="1"/>
<path d="M473.1 382.5h1.6" stroke="#A0A0A0" stroke-width="1"/>
<path d="M470.5 382.5h1.7" stroke="#A0A0A0" stroke-width="1"/>
<path d="M468.2 382.5h3.5" stroke="#121212" stroke-width="1"/>
<path d="M465.3 382.5h3.7" stroke="#121212" stroke-width="1"/>
<path d="M314.3 384.5h2.0" stroke="#A8A8A8" stroke-width="1"/>
<path d="M316.5 385.5h1.7" stroke="#A0A0A0" stroke-width="1"/>
<path d="M322.6 385.5h1.8" stroke="#A0A0A0" stroke-width="1"/>
<path d="M325.7 384.5h4.4" stroke="#121212" stroke-width="1"/>
<path d="M478.9 384.5h2.0" stroke="#A8A8A8" stroke-width="1"/>
<path d="M473.6 385.5h1.9" stroke="#A0A0A0" stroke-width="1"/>
<path d="M476.2 385.5h1.5" stroke="#A0A0A0" stroke-width="1"/>
<path d="M472.1 384.5h3.7" stroke="#121212" stroke-width="1"/>
<path d="M322.1 385.5h2.0" stroke="#9C9C9C" stroke-width="1"/>
<path d="M473.5 385.5h1.8" stroke="#9C9C9C" stroke-width="1"/>
<path d="M313.2 386.5h2.0" stroke="#A8A8A8" stroke-width="1"/>
<path d="M318.7 388.5h1.8" stroke="#A0A0A0" stroke-width="1"/>
<path d="M321.2 388.5h1.5" stroke="#A0A0A0" stroke-width="1"/>
<path d="M322.1 386.5h2.2" stroke="#121212" stroke-width="1"/>
<path d="M480.0 386.5h2.0" stroke="#A8A8A8" stroke-width="1"/>
<path d="M470.8 388.5h1.9" stroke="#A0A0A0" stroke-width="1"/>
<path d="M472.0 388.5h2.2" stroke="#A0A0A0" stroke-width="1"/>
<path d="M474.8 386.5h4.7" stroke="#121212" stroke-width="1"/>
<path d="M317.1 388.5h2.4" stroke="#9C9C9C" stroke-width="1"/>
<path d="M475.1 388.5h2.7" stroke="#9C9C9C" stroke-width="1"/>
<path d="M312.1 389.5h2.0" stroke="#A8A8A8" stroke-width="1"/>
<path d="M316.5 390.5h2.1" stroke="#A0A0A0" stroke-width="1"/>
<path d="M316.6 390.5h1.9" stroke="#A0A0A0" stroke-width="1"/>
<path d="M315.2 389.5h4.5" stroke="#121212" stroke-width="1"/>
<path d="M481.1 389.5h2.0" stroke="#A8A8A8" stroke-width="1"/>
<path d="M477.0 390.5h2.1" stroke="#A0A0A0" stroke-width="1"/>
<path d="M471.7 390.5h1.9" stroke="#A0A0A0" stroke-width="1"/>
<path d="M476.0 389.5h5.0" stroke="#121212" stroke-width="1"/>
<path d="M476.7 389.5h2.5" stroke="#121212" stroke-width="1"/>
<path d="M315.1 390.5h1.4" stroke="#9C9C9C" stroke-width="1"/>
<path d="M477.2 390.5h2.0" stroke="#9C9C9C" stroke-width="1"/>
<path d="M311.2 392.5h2.0" stroke="#A8A8A8" stroke-width="1"/>
<path d="M318.2 392.5h1.8" stroke="#A0A0A0" stroke-width="1"/>
<path d="M316.3 392.5h1.8" stroke="#A0A0A0" stroke-width="1"/>
<path d="M322.2 392.5h4.8" stroke="#121212" stroke-width="1"/>
<path d="M482.0 392.5h2.0" stroke="#A8A8A8" stroke-width="1"/>
<path d="M476.6 392.5h1.6" stroke="#A0A0A0" stroke-width="1"/>
<path d="M479.1 392.5h1.7" stroke="#A0A0A0" stroke-width="1"/>
<path d="M475.4 392.5h3.2" stroke="#121212" stroke-width="1"/>
<path d="M310.3 394.5h2.0" stroke="#A8A8A8" stroke-width="1"/>
<path d="M316.4 395.5h1.6" stroke="#A0A0A0" stroke-width="1"/>
<path d="M318.6 395.5h2.3" stroke="#A0A0A0" stroke-width="1"/>
<path d="M318.7 394.5h2.1" stroke="#121212" stroke-width="1"/>
<path d="M482.9 394.5h2.0" stroke="#A8A8A8" stroke-width="1"/>
<path d="M478.4 395.5h2.3" stroke="#A0A0A0" stroke-width="1"/>
<path d="M478.6 395.5h1.6" stroke="#A0A0A0" stroke-width="1"/>
<path d="M479.6 394.5h3.4" stroke="#121212" stroke-width="1"/>
<path d="M309.5 396.5h2.0" stroke="#A8A8A8" stroke-width="1"/>
<path d="M312.2 398.5h2.2" stroke="#A0A0A0" stroke-width="1"/>
<path d="M313.6 398.5h2.2" stroke="#A0A0A0" stroke-width="1"/>
<path d="M318.5 396.5h2.5" stroke="#121212" stroke-width="1"/>
<path d="M483.7 396.5h2.0" stroke="#A8A8A8" stroke-width="1"/>
<path d="M476.3 398.5h2.1" stroke="#A0A0A0" stroke-width="1"/>
<path d="M476.7 398.5h2.1" stroke="#A0A0A0" stroke-width="1"/>
<path d="M470.7 396.5h4.1" stroke="#121212" stroke-width="1"/>
<path d="M308.8 399.5h2.0" stroke="#A8A8A8" stroke-width="1"/>
<path d="M314.2 400.5h1.8" stroke="#A0A0A0" stroke-width="1"/>
<path d="M316.4 400.5h2.2" stroke="#A0A0A0" stroke-width="1"/>
<path d="M312.1 399.5h2.7" stroke="#121212" stroke-width="1"/>
<path d="M484.4 399.5h2.0" stroke="#A8A8A8" stroke-width="1"/>
<path d="M481.0 400.5h1.5" stroke="#A0A0A0" stroke-width="1"/>
<path d="M477.8 400.5h2.2" stroke="#A0A0A0" stroke-width="1"/>
<path d="M478.6 399.5h3.4" stroke="#121212" stroke-width="1"/>
<path d="M476.1 399.5h4.0" stroke="#121212" stroke-width="1"/>
<path d="M311.7 400.5h2.7" stroke="#9C9C9C" stroke-width="1"/>
<path d="M476.7 400.5h2.1" stroke="#9C9C9C" stroke-width="1"/>
<path d="M308.1 402.5h2.0" stroke="#A8A8A8" stroke-width="1"/>
<path d="M315.6 402.5h1.7" stroke="#A0A0A0" stroke-width="1"/>
<path d="M316.3 402.5h1.6" stroke="#A0A0A0" stroke-width="1"/>
<path d="M314.5 402.5h4.0" stroke="#121212" stroke-width="1"/>
<path d="M485.1 402.5h2.0" stroke="#A8A8A8" stroke-width="1"/>
<path d="M483.0 402.5h1.9" stroke="#A0A0A0" stroke-width="1"/>
<path d="M482.9 402.5h1.8" stroke="#A0A0A0" stroke-width="1"/>
<path d="M478.4 402.5h2.9" stroke="#121212" stroke-width="1"/>
<path d="M482.7 402.5h2.1" stroke="#121212" stroke-width="1"/>
<path d="M307.5 404.5h2.0" stroke="#A8A8A8" stroke-width="1"/>
<path d="M314.8 405.5h2.1" stroke="#A0A0A0" stroke-width="1"/>
<path d="M310.7 405.5h1.7" stroke="#A0A0A0" stroke-width="1"/>
<path d="M318.5 404.5h4.4" stroke="#121212" stroke-width="1"/>
<path d="M485.7 404.5h2.0" stroke="#A8A8A8" stroke-width="1"/>
<path d="M479.6 405.5h2.4" stroke="#A0A0A0" stroke-width="1"/>
<path d="M479.2 405.5h2.4" stroke="#A0A0A0" stroke-width="1"/>
<path d="M481.8 404.5h2.1" stroke="#121212" stroke-width="1"/>
<path d="M307.0 406.5h2.0" stroke="#A8A8A8" stroke-width="1"/>
<path d="M312.1 408.5h2.3" stroke="#A0A0A0" stroke-width="1"/>
<path d="M312.9 408.5h1.6" stroke="#A0A0A0" stroke-width="1"/>
<path d="M308.8 406.5h4.3" stroke="#121212" stroke-width="1"/>
<path d="M486.2 406.5h2.0" stroke="#A8A8A8" stroke-width="1"/>
<path d="M480.9 408.5h2.3" stroke="#A0A0A0" stroke-width="1"/>
<path d="M482.7 408.5h1.6" stroke="#A0A0A0" stroke-width="1"/>
<path d="M481.1 406.5h2.3" stroke="#121212" stroke-width="1"/>
<path d="M474.3 406.5h4.5" stroke="#121212" stroke-width="1"/>
<path d="M310.5 408.5h1.2" stroke="#9C9C9C" stroke-width="1"/>
<path d="M482.0 408.5h1.2" stroke="#9C9C9C" stroke-width="1"/>
<path d="M306.5 409.5h2.0" stroke="#A8A8A8" stroke-width="1"/>
<path d="M316.0 410.5h2.2" stroke="#A0A0A0" stroke-width="1"/>
<path d="M310.4 410.5h2.0" stroke="#A0A0A0" stroke-width="1"/>
<path d="M310.7 409.5h4.1" stroke="#121212" stroke-width="1"/>
<path d="M486.7 409.5h2.0" stroke="#A8A8A8" stroke-width="1"/>
<path d="M477.9 410.5h2.4" stroke="#A0A0A0" stroke-width="1"/>
<path d="M484.4 410.5h2.3" stroke="#A0A0A0" stroke-width="1"/>
<path d="M478.9 409.5h4.3" stroke="#121212" stroke-width="1"/>
<path d="M310.9 410.5h2.9" stroke="#9C9C9C" stroke-width="1"/>
<path d="M483.2 410.5h1.1" stroke="#9C9C9C" stroke-width="1"/>
<path d="M306.1 412.5h2.0" stroke="#A8A8A8" stroke-width="1"/>
<path d="M314.3 412.5h2.2" stroke="#A0A0A0" stroke-width="1"/>
<path d="M315.4 412.5h2.2" stroke="#A0A0A0" stroke-width="1"/>
<path d="M314.8 412.5h2.8" stroke="#121212" stroke-width="1"/>
<path d="M487.1 412.5h2.0" stroke="#A8A8A8" stroke-width="1"/>
<path d="M480.9 412.5h1.8" stroke="#A0A0A0" stroke-width="1"/>
<path d="M482.9 412.5h1.6" stroke="#A0A0A0" stroke-width="1"/>
<path d="M479.4 412.5h3.0" stroke="#121212" stroke-width="1"/>
<path d="M312.1 412.5h2.5" stroke="#9C9C9C" stroke-width="1"/>
<path d="M484.2 412.5h1.2" stroke="#9C9C9C" stroke-width="1"/>
<path d="M305.8 414.5h2.0" stroke="#A8A8A8" stroke-width="1"/>
<path d="M314.1 415.5h1.9" stroke="#A0A0A0" stroke-width="1"/>
<path d="M309.5 415.5h2.5" stroke="#A0A0A0" stroke-width="1"/>
<path d="M307.6 414.5h3.6" stroke="#121212" stroke-width="1"/>
<path d="M487.4 414.5h2.0" stroke="#A8A8A8" stroke-width="1"/>
<path d="M482.8 415.5h1.8" stroke="#A0A0A0" stroke-width="1"/>
<path d="M485.6 415.5h2.1" stroke="#A0A0A0" stroke-width="1"/>
<path d="M475.3 414.5h4.2" stroke="#121212" stroke-width="1"/>
<path d="M311.6 415.5h1.3" stroke="#9C9C9C" stroke-width="1"/>
<path d="M480.5 415.5h1.9" stroke="#9C9C9C" stroke-width="1"/>
<path d="M305.5 416.5h2.0" stroke="#A8A8A8" stroke-width="1"/>
<path d="M313.5 418.5h1.6" stroke="#A0A0A0" stroke-width="1"/>
<path d="M309.7 418.5h2.4" stroke="#A0A0A0" stroke-width="1"/>
<path d="M311.8 416.5h3.3" stroke="#121212" stroke-width="1"/>
<path d="M487.7 416.5h2.0" stroke="#A8A8A8" stroke-width="1"/>
<path d="M485.6 418.5h2.2" stroke="#A0A0A0" stroke-width="1"/>
<path d="M484.7 418.5h2.0" stroke="#A0A0A0" stroke-width="1"/>
<path d="M481.1 416.5h2.0" stroke="#121212" stroke-width="1"/>
<path d="M313.3 418.5h2.4" stroke="#9C9C9C" stroke-width="1"/>
<path d="M483.8 418.5h1.0" stroke="#9C9C9C" stroke-width="1"/>
<path d="M305.2 419.5h2.0" stroke="#A8A8A8" stroke-width="1"/>
<path d="M308.8 420.5h2.2" stroke="#A0A0A0" stroke-width="1"/>
<path d="M309.8 420.5h2.0" stroke="#A0A0A0" stroke-width="1"/>
<path d="M309.0 419.5h4.5" stroke="#121212" stroke-width="1"/>
<path d="M310.0 419.5h3.5" stroke="#121212" stroke-width="1"/>
<path d="M488.0 419.5h2.0" stroke="#A8A8A8" stroke-width="1"/>
<path d="M483.3 420.5h2.3" stroke="#A0A0A0" stroke-width="1"/>
<path d="M479.7 420.5h2.2" stroke="#A0A0A0" stroke-width="1"/>
<path d="M477.0 419.5h2.2" stroke="#121212" stroke-width="1"/>
<path d="M310.0 420.5h1.3" stroke="#9C9C9C" stroke-width="1"/>
<path d="M483.8 420.5h1.8" stroke="#9C9C9C" stroke-width="1"/>
<path d="M305.1 422.5h2.0" stroke="#A8A8A8" stroke-width="1"/>
<path d="M308.1 422.5h1.6" stroke="#A0A0A0" stroke-width="1"/>
<path d="M312.5 422.5h2.4" stroke="#A0A0A0" stroke-width="1"/>
<path d="M308.8 422.5h4.4" stroke="#121212" stroke-width="1"/>
<path d="M488.1 422.5h2.0" stroke="#A8A8A8" stroke-width="1"/>
<path d="M482.6 422.5h2.0" stroke="#A0A0A0" stroke-width="1"/>
<path d="M482.2 422.5h1.6" stroke="#A0A0A0" stroke-width="1"/>
<path d="M482.4 422.5h4.1" stroke="#121212" stroke-width="1"/>
<path d="M311.4 422.5h2.2" stroke="#9C9C9C" stroke-width="1"/>
<path d="M480.6 422.5h1.0" stroke="#9C9C9C" stroke-width="1"/>
<path d="M305.0 424.5h2.0" stroke="#A8A8A8" stroke-width="1"/>
<path d="M306.9 425.5h1.8" stroke="#A0A0A0" stroke-width="1"/>
<path d="M309.7 425.5h2.0" stroke="#A0A0A0" stroke-width="1"/>
<path d="M313.7 424.5h3.2" stroke="#121212" stroke-width="1"/>
<path d="M316.5 424.5h4.4" stroke="#121212" stroke-width="1"/>
<path d="M488.2 424.5h2.0" stroke="#A8A8A8" stroke-width="1"/>
<path d="M482.1 425.5h1.6" stroke="#A0A0A0" stroke-width="1"/>
<path d="M485.4 425.5h1.9" stroke="#A0A0A0" stroke-width="1"/>
<path d="M476.9 424.5h2.1" stroke="#121212" stroke-width="1"/>
<path d="M478.2 424.5h2.6" stroke="#121212" stroke-width="1"/>
<path d="M307.8 425.5h2.5" stroke="#9C9C9C" stroke-width="1"/>
<path d="M481.9 425.5h2.7" stroke="#9C9C9C" stroke-width="1"/>
<path d="M304.9 426.5h2.0" stroke="#A8A8A8" stroke-width="1"/>
<path d="M309.9 428.5h2.5" stroke="#A0A0A0" stroke-width="1"/>
<path d="M306.7 428.5h2.4" stroke="#A0A0A0" stroke-width="1"/>
<path d="M308.9 426.5h2.1" stroke="#121212" stroke-width="1"/>
<path d="M307.5 426.5h4.9" stroke="#121212" stroke-width="1"/>
<path d="M488.3 426.5h2.0" stroke="#A8A8A8" stroke-width="1"/>
<path d="M479.4 428.5h2.2" stroke="#A0A0A0" stroke-width="1"/>
<path d="M479.9 428.5h2.2" stroke="#A0A0A0" stroke-width="1"/>
<path d="M479.9 426.5h2.6" stroke="#121212" stroke-width="1"/>
<path d="M304.9 429.5h2.0" stroke="#A8A8A8" stroke-width="1"/>
<path d="M308.5 430.5h2.5" stroke="#A0A0A0" stroke-width="1"/>
<path d="M311.0 430.5h1.9" stroke="#A0A0A0" stroke-width="1"/>
<path d="M306.6 429.5h3.2" stroke="#121212" stroke-width="1"/>
<path d="M488.3 429.5h2.0" stroke="#A8A8A8" stroke-width="1"/>
<path d="M480.6 430.5h2.0" stroke="#A0A0A0" stroke-width="1"/>
<path d="M484.9 430.5h2.2" stroke="#A0A0A0" stroke-width="1"/>
<path d="M482.4 429.5h3.0" stroke="#121212" stroke-width="1"/>
<path d="M305.0 432.5h2.0" stroke="#A8A8A8" stroke-width="1"/>
<path d="M312.2 432.5h2.5" stroke="#A0A0A0" stroke-width="1"/>
<path d="M308.7 432.5h1.6" stroke="#A0A0A0" stroke-width="1"/>
<path d="M309.6 432.5h4.4" stroke="#121212" stroke-width="1"/>
<path d="M314.6 432.5h2.2" stroke="#121212" stroke-width="1"/>
<path d="M488.2 432.5h2.0" stroke="#A8A8A8" stroke-width="1"/>
<path d="M485.9 432.5h1.9" stroke="#A0A0A0" stroke-width="1"/>
<path d="M485.0 432.5h2.2" stroke="#A0A0A0" stroke-width="1"/>
<path d="M478.9 432.5h3.9" stroke="#121212" stroke-width="1"/>
<path d="M305.1 434.5h2.0" stroke="#A8A8A8" stroke-width="1"/>
<path d="M312.6 435.5h1.9" stroke="#A0A0A0" stroke-width="1"/>
<path d="M310.2 435.5h2.0" stroke="#A0A0A0" stroke-width="1"/>
<path d="M315.8 434.5h2.9" stroke="#121212" stroke-width="1"/>
<path d="M309.6 434.5h3.8" stroke="#121212" stroke-width="1"/>
<path d="M488.1 434.5h2.0" stroke="#A8A8A8" stroke-width="1"/>
<path d="M484.9 435.5h1.5" stroke="#A0A0A0" stroke-width="1"/>
<path d="M485.5 435.5h2.1" stroke="#A0A0A0" stroke-width="1"/>
<path d="M479.8 434.5h2.6" stroke="#121212" stroke-width="1"/>
<path d="M311.4 435.5h2.3" stroke="#9C9C9C" stroke-width="1"/>
<path d="M481.3 435.5h2.5" stroke="#9C9C9C" stroke-width="1"/>
<path d="M305.3 436.5h2.0" stroke="#A8A8A8" stroke-width="1"/>
<path d="M314.6 438.5h1.6" stroke="#A0A0A0" stroke-width="1"/>
<path d="M311.1 438.5h1.6" stroke="#A0A0A0" stroke-width="1"/>
<path d="M308.9 436.5h3.4" stroke="#121212" stroke-width="1"/>
<path d="M487.9 436.5h2.0" stroke="#A8A8A8" stroke-width="1"/>
<path d="M478.8 438.5h1.7" stroke="#A0A0A0" stroke-width="1"/>
<path d="M480.6 438.5h2.3" stroke="#A0A0A0" stroke-width="1"/>
<path d="M481.1 436.5h2.3" stroke="#121212" stroke-width="1"/>
<path d="M308.9 438.5h1.2" stroke="#9C9C9C" stroke-width="1"/>
<path d="M484.3 438.5h2.2" stroke="#9C9C9C" stroke-width="1"/>
<path d="M305.5 439.5h2.0" stroke="#A8A8A8" stroke-width="1"/>
<path d="M311.8 440.5h1.9" stroke="#A0A0A0" stroke-width="1"/>
<path d="M309.8 440.5h2.3" stroke="#A0A0A0" stroke-width="1"/>
<path d="M309.1 439.5h4.7" stroke="#121212" stroke-width="1"/>
<path d="M487.7 439.5h2.0" stroke="#A8A8A8" stroke-width="1"/>
<path d="M478.3 440.5h2.1" stroke="#A0A0A0" stroke-width="1"/>
<path d="M478.3 440.5h1.6" stroke="#A0A0A0" stroke-width="1"/>
<path d="M484.8 439.5h2.2" stroke="#121212" stroke-width="1"/>
<path d="M482.8 439.5h3.1" stroke="#121212" stroke-width="1"/>
<path d="M312.3 440.5h2.5" stroke="#9C9C9C" stroke-width="1"/>
<path d="M484.5 440.5h1.8" stroke="#9C9C9C" stroke-width="1"/>
<path d="M305.8 442.5h2.0" stroke="#A8A8A8" stroke-width="1"/>
<path d="M311.3 442.5h1.5" stroke="#A0A0A0" stroke-width="1"/>
<path d="M315.4 442.5h2.5" stroke="#A0A0A0" stroke-width="1"/>
<path d="M308.9 442.5h2.0" stroke="#121212" stroke-width="1"/>
<path d="M311.3 442.5h3.0" stroke="#121212" stroke-width="1"/>
<path d="M487.4 442.5h2.0" stroke="#A8A8A8" stroke-width="1"/>
<path d="M485.1 442.5h2.3" stroke="#A0A0A0" stroke-width="1"/>
<path d="M479.9 442.5h1.8" stroke="#A0A0A0" stroke-width="1"/>
<path d="M483.1 442.5h3.4" stroke="#121212" stroke-width="1"/>
<path d="M479.9 442.5h4.2" stroke="#121212" stroke-width="1"/>
<path d="M306.2 444.5h2.0" stroke="#A8A8A8" stroke-width="1"/>
<path d="M309.0 445.5h2.4" stroke="#A0A0A0" stroke-width="1"/>
<path d="M313.0 445.5h2.3" stroke="#A0A0A0" stroke-width="1"/>
<path d="M308.8 444.5h2.3" stroke="#121212" stroke-width="1"/>
<path d="M487.0 444.5h2.0" stroke="#A8A8A8" stroke-width="1"/>
<path d="M482.6 445.5h2.3" stroke="#A0A0A0" stroke-width="1"/>
<path d="M481.2 445.5h1.6" stroke="#A0A0A0" stroke-width="1"/>
<path d="M480.4 444.5h2.7" stroke="#121212" stroke-width="1"/>
<path d="M306.6 446.5h2.0" stroke="#A8A8A8" stroke-width="1"/>
<path d="M309.5 448.5h2.5" stroke="#A0A0A0" stroke-width="1"/>
<path d="M312.7 448.5h1.9" stroke="#A0A0A0" stroke-width="1"/>
<path d="M310.1 446.5h4.5" stroke="#121212" stroke-width="1"/>
<path d="M486.6 446.5h2.0" stroke="#A8A8A8" stroke-width="1"/>
<path d="M484.2 448.5h1.9" stroke="#A0A0A0" stroke-width="1"/>
<path d="M478.4 448.5h1.5" stroke="#A0A0A0" stroke-width="1"/>
<path d="M476.1 446.5h3.1" stroke="#121212" stroke-width="1"/>
<path d="M310.8 448.5h1.9" stroke="#9C9C9C" stroke-width="1"/>
<path d="M481.6 448.5h2.0" stroke="#9C9C9C" stroke-width="1"/>
<path d="M307.1 449.5h2.0" stroke="#A8A8A8" stroke-width="1"/>
<path d="M316.6 450.5h1.7" stroke="#A0A0A0" stroke-width="1"/>
<path d="M315.2 450.5h1.5" stroke="#A0A0A0" stroke-width="1"/>
<path d="M314.0 449.5h4.9" stroke="#121212" stroke-width="1"/>
<path d="M486.1 449.5h2.0" stroke="#A8A8A8" stroke-width="1"/>
<path d="M476.8 450.5h2.2" stroke="#A0A0A0" stroke-width="1"/>
<path d="M480.3 450.5h1.6" stroke="#A0A0A0" stroke-width="1"/>
<path d="M478.1 449.5h4.3" stroke="#121212" stroke-width="1"/>
<path d="M478.3 449.5h3.8" stroke="#121212" stroke-width="1"/>
<path d="M307.6 452.5h2.0" stroke="#A8A8A8" stroke-width="1"/>
<path d="M314.3 452.5h2.1" stroke="#A0A0A0" stroke-width="1"/>
<path d="M311.1 452.5h1.9" stroke="#A0A0A0" stroke-width="1"/>
<path d="M316.6 452.5h4.4" stroke="#121212" stroke-width="1"/>
<path d="M317.6 452.5h3.3" stroke="#121212" stroke-width="1"/>
<path d="M485.6 452.5h2.0" stroke="#A8A8A8" stroke-width="1"/>
<path d="M483.7 452.5h2.3" stroke="#A0A0A0" stroke-width="1"/>
<path d="M482.5 452.5h1.8" stroke="#A0A0A0" stroke-width="1"/>
<path d="M480.3 452.5h2.6" stroke="#121212" stroke-width="1"/>
<path d="M308.3 454.5h2.0" stroke="#A8A8A8" stroke-width="1"/>
<path d="M317.9 455.5h1.7" stroke="#A0A0A0" stroke-width="1"/>
<path d="M313.3 455.5h1.8" stroke="#A0A0A0" stroke-width="1"/>
<path d="M314.7 454.5h2.9" stroke="#121212" stroke-width="1"/>
<path d="M484.9 454.5h2.0" stroke="#A8A8A8" stroke-width="1"/>
<path d="M478.2 455.5h2.3" stroke="#A0A0A0" stroke-width="1"/>
<path d="M477.2 455.5h1.6" stroke="#A0A0A0" stroke-width="1"/>
<path d="M476.3 454.5h2.1" stroke="#121212" stroke-width="1"/>
<path d="M478.7 454.5h2.4" stroke="#121212" stroke-width="1"/>
<path d="M308.9 456.5h2.0" stroke="#A8A8A8" stroke-width="1"/>
<path d="M317.3 458.5h2.5" stroke="#A0A0A0" stroke-width="1"/>
<path d="M315.4 458.5h1.6" stroke="#A0A0A0" stroke-width="1"/>
<path d="M313.0 456.5h4.8" stroke="#121212" stroke-width="1"/>
<path d="M320.0 456.5h2.1" stroke="#121212" stroke-width="1"/>
<path d="M484.3 456.5h2.0" stroke="#A8A8A8" stroke-width="1"/>
<path d="M476.1 458.5h1.6" stroke="#A0A0A0" stroke-width="1"/>
<path d="M481.5 458.5h2.2" stroke="#A0A0A0" stroke-width="1"/>
<path d="M478.6 456.5h2.6" stroke="#121212" stroke-width="1"/>
<path d="M317.0 458.5h2.8" stroke="#9C9C9C" stroke-width="1"/>
<path d="M478.2 458.5h1.6" stroke="#9C9C9C" stroke-width="1"/>
<path d="M309.7 459.5h2.0" stroke="#A8A8A8" stroke-width="1"/>
<path d="M316.5 460.5h1.9" stroke="#A0A0A0" stroke-width="1"/>
<path d="M314.3 460.5h2.0" stroke="#A0A0A0" stroke-width="1"/>
<path d="M317.2 459.5h4.9" stroke="#121212" stroke-width="1"/>
<path d="M483.5 459.5h2.0" stroke="#A8A8A8" stroke-width="1"/>
<path d="M474.1 460.5h1.6" stroke="#A0A0A0" stroke-width="1"/>
<path d="M481.7 460.5h1.5" stroke="#A0A0A0" stroke-width="1"/>
<path d="M477.3 459.5h2.7" stroke="#121212" stroke-width="1"/>
<path d="M310.5 462.5h2.0" stroke="#A8A8A8" stroke-width="1"/>
<path d="M312.3 462.5h2.3" stroke="#A0A0A0" stroke-width="1"/>
<path d="M315.5 462.5h2.0" stroke="#A0A0A0" stroke-width="1"/>
<path d="M318.3 462.5h4.4" stroke="#121212" stroke-width="1"/>
<path d="M482.7 462.5h2.0" stroke="#A8A8A8" stroke-width="1"/>
<path d="M474.6 462.5h1.7" stroke="#A0A0A0" stroke-width="1"/>
<path d="M475.5 462.5h2.4" stroke="#A0A0A0" stroke-width="1"/>
<path d="M471.6 462.5h3.7" stroke="#121212" stroke-width="1"/>
<path d="M313.8 462.5h1.2" stroke="#9C9C9C" stroke-width="1"/>
<path d="M474.6 462.5h2.1" stroke="#9C9C9C" stroke-width="1"/>
<path d="M311.4 464.5h2.0" stroke="#A8A8A8" stroke-width="1"/>
<path d="M318.8 465.5h2.4" stroke="#A0A0A0" stroke-width="1"/>
<path d="M320.7 465.5h2.5" stroke="#A0A0A0" stroke-width="1"/>
<path d="M316.1 464.5h2.5" stroke="#121212" stroke-width="1"/>
<path d="M481.8 464.5h2.0" stroke="#A8A8A8" stroke-width="1"/>
<path d="M479.5 465.5h1.9" stroke="#A0A0A0" stroke-width="1"/>
<path d="M474.2 465.5h2.0" stroke="#A0A0A0" stroke-width="1"/>
<path d="M473.5 464.5h4.8" stroke="#121212" stroke-width="1"/>
<path d="M475.5 464.5h3.7" stroke="#121212" stroke-width="1"/>
<path d="M312.3 466.5h2.0" stroke="#A8A8A8" stroke-width="1"/>
<path d="M317.7 468.5h1.6" stroke="#A0A0A0" stroke-width="1"/>
<path d="M314.1 468.5h2.1" stroke="#A0A0A0" stroke-width="1"/>
<path d="M319.7 466.5h2.1" stroke="#121212" stroke-width="1"/>
<path d="M480.9 466.5h2.0" stroke="#A8A8A8" stroke-width="1"/>
<path d="M478.5 468.5h1.8" stroke="#A0A0A0" stroke-width="1"/>
<path d="M478.0 468.5h2.5" stroke="#A0A0A0" stroke-width="1"/>
<path d="M475.7 466.5h2.8" stroke="#121212" stroke-width="1"/>
<path d="M469.1 466.5h4.2" stroke="#121212" stroke-width="1"/>
<path d="M320.0 468.5h2.3" stroke="#9C9C9C" stroke-width="1"/>
<path d="M475.8 468.5h2.3" stroke="#9C9C9C" stroke-width="1"/>
<path d="M313.4 469.5h2.0" stroke="#A8A8A8" stroke-width="1"/>
<path d="M320.7 470.5h2.1" stroke="#A0A0A0" stroke-width="1"/>
<path d="M322.1 470.5h2.4" stroke="#A0A0A0" stroke-width="1"/>
<path d="M323.4 469.5h3.8" stroke="#121212" stroke-width="1"/>
<path d="M479.8 469.5h2.0" stroke="#A8A8A8" stroke-width="1"/>
<path d="M477.7 470.5h2.2" stroke="#A0A0A0" stroke-width="1"/>
<path d="M473.6 470.5h1.5" stroke="#A0A0A0" stroke-width="1"/>
<path d="M475.2 469.5h4.5" stroke="#121212" stroke-width="1"/>
<path d="M470.6 469.5h4.6" stroke="#121212" stroke-width="1"/>
<path d="M319.6 470.5h1.2" stroke="#9C9C9C" stroke-width="1"/>
<path d="M472.8 470.5h2.2" stroke="#9C9C9C" stroke-width="1"/>
<path d="M314.5 472.5h2.0" stroke="#A8A8A8" stroke-width="1"/>
<path d="M320.8 472.5h2.0" stroke="#A0A0A0" stroke-width="1"/>
<path d="M321.8 472.5h2.2" stroke="#A0A0A0" stroke-width="1"/>
<path d="M323.4 472.5h3.8" stroke="#121212" stroke-width="1"/>
<path d="M316.6 472.5h4.1" stroke="#121212" stroke-width="1"/>
<path d="M478.7 472.5h2.0" stroke="#A8A8A8" stroke-width="1"/>
<path d="M471.8 472.5h2.4" stroke="#A0A0A0" stroke-width="1"/>
<path d="M471.2 472.5h1.6" stroke="#A0A0A0" stroke-width="1"/>
<path d="M468.1 472.5h4.5" stroke="#121212" stroke-width="1"/>
<path d="M321.7 472.5h1.5" stroke="#9C9C9C" stroke-width="1"/>
<path d="M474.2 472.5h1.0" stroke="#9C9C9C" stroke-width="1"/>
<path d="M315.7 474.5h2.0" stroke="#A8A8A8" stroke-width="1"/>
<path d="M321.5 475.5h2.4" stroke="#A0A0A0" stroke-width="1"/>
<path d="M321.1 475.5h1.7" stroke="#A0A0A0" stroke-width="1"/>
<path d="M319.5 474.5h2.8" stroke="#121212" stroke-width="1"/>
<path d="M477.5 474.5h2.0" stroke="#A8A8A8" stroke-width="1"/>
<path d="M474.2 475.5h1.6" stroke="#A0A0A0" stroke-width="1"/>
<path d="M473.0 475.5h1.6" stroke="#A0A0A0" stroke-width="1"/>
<path d="M469.7 474.5h3.9" stroke="#121212" stroke-width="1"/>
<path d="M468.8 474.5h2.5" stroke="#121212" stroke-width="1"/>
<path d="M321.3 475.5h2.4" stroke="#9C9C9C" stroke-width="1"/>
<path d="M472.1 475.5h2.1" stroke="#9C9C9C" stroke-width="1"/>
<path d="M317.0 476.5h2.0" stroke="#A8A8A8" stroke-width="1"/>
<path d="M319.8 478.5h1.8" stroke="#A0A0A0" stroke-width="1"/>
<path d="M322.6 478.5h2.0" stroke="#A0A0A0" stroke-width="1"/>
<path d="M327.7 476.5h3.7" stroke="#121212" stroke-width="1"/>
<path d="M476.2 476.5h2.0" stroke="#A8A8A8" stroke-width="1"/>
<path d="M473.2 478.5h2.1" stroke="#A0A0A0" stroke-width="1"/>
<path d="M472.5 478.5h1.8" stroke="#A0A0A0" stroke-width="1"/>
<path d="M467.8 476.5h2.6" stroke="#121212" stroke-width="1"/>
<path d="M467.7 476.5h4.5" stroke="#121212" stroke-width="1"/>
<path d="M318.3 479.5h2.0" stroke="#A8A8A8" stroke-width="1"/>
<path d="M325.1 480.5h2.1" stroke="#A0A0A0" stroke-width="1"/>
<path d="M327.7 480.5h1.6" stroke="#A0A0A0" stroke-width="1"/>
<path d="M327.7 479.5h3.0" stroke="#121212" stroke-width="1"/>
<path d="M474.9 479.5h2.0" stroke="#A8A8A8" stroke-width="1"/>
<path d="M466.2 480.5h1.8" stroke="#A0A0A0" stroke-width="1"/>
<path d="M467.1 480.5h1.7" stroke="#A0A0A0" stroke-width="1"/>
<path d="M463.8 479.5h3.6" stroke="#121212" stroke-width="1"/>
<path d="M323.0 480.5h2.5" stroke="#9C9C9C" stroke-width="1"/>
<path d="M471.6 480.5h2.7" stroke="#9C9C9C" stroke-width="1"/>
<path d="M319.8 482.5h2.0" stroke="#A8A8A8" stroke-width="1"/>
<path d="M324.0 482.5h1.8" stroke="#A0A0A0" stroke-width="1"/>
<path d="M324.2 482.5h2.5" stroke="#A0A0A0" stroke-width="1"/>
<path d="M325.6 482.5h2.2" stroke="#121212" stroke-width="1"/>
<path d="M473.4 482.5h2.0" stroke="#A8A8A8" stroke-width="1"/>
<path d="M470.3 482.5h2.4" stroke="#A0A0A0" stroke-width="1"/>
<path d="M465.4 482.5h2.4" stroke="#A0A0A0" stroke-width="1"/>
<path d="M466.3 482.5h2.3" stroke="#121212" stroke-width="1"/>
<path d="M323.8 482.5h1.1" stroke="#9C9C9C" stroke-width="1"/>
<path d="M467.3 482.5h1.6" stroke="#9C9C9C" stroke-width="1"/>
<path d="M321.3 484.5h2.0" stroke="#A8A8A8" stroke-width="1"/>
<path d="M328.5 485.5h1.8" stroke="#A0A0A0" stroke-width="1"/>
<path d="M325.9 485.5h1.6" stroke="#A0A0A0" stroke-width="1"/>
<path d="M326.9 484.5h2.5" stroke="#121212" stroke-width="1"/>
<path d="M471.9 484.5h2.0" stroke="#A8A8A8" stroke-width="1"/>
<path d="M469.2 485.5h2.0" stroke="#A0A0A0" stroke-width="1"/>
<path d="M469.5 485.5h2.5" stroke="#A0A0A0" stroke-width="1"/>
<path d="M463.4 484.5h3.3" stroke="#121212" stroke-width="1"/>
<path d="M327.4 485.5h2.9" stroke="#9C9C9C" stroke-width="1"/>
<path d="M466.6 485.5h1.4" stroke="#9C9C9C" stroke-width="1"/>
<path d="M323.0 486.5h2.0" stroke="#A8A8A8" stroke-width="1"/>
<path d="M332.6 488.5h1.6" stroke="#A0A0A0" stroke-width="1"/>
<path d="M330.0 488.5h1.7" stroke="#A0A0A0" stroke-width="1"/>
<path d="M326.6 486.5h4.6" stroke="#121212" stroke-width="1"/>
<path d="M331.8 486.5h2.2" stroke="#121212" stroke-width="1"/>
<path d="M470.2 486.5h2.0" stroke="#A8A8A8" stroke-width="1"/>
<path d="M468.1 488.5h2.4" stroke="#A0A0A0" stroke-width="1"/>
<path d="M464.8 488.5h1.9" stroke="#A0A0A0" stroke-width="1"/>
<path d="M457.6 486.5h3.7" stroke="#121212" stroke-width="1"/>
<path d="M324.8 489.5h2.0" stroke="#A8A8A8" stroke-width="1"/>
<path d="M327.8 490.5h2.1" stroke="#A0A0A0" stroke-width="1"/>
<path d="M330.1 490.5h1.9" stroke="#A0A0A0" stroke-width="1"/>
<path d="M333.6 489.5h2.3" stroke="#121212" stroke-width="1"/>
<path d="M468.4 489.5h2.0" stroke="#A8A8A8" stroke-width="1"/>
<path d="M465.1 490.5h2.2" stroke="#A0A0A0" stroke-width="1"/>
<path d="M460.9 490.5h1.6" stroke="#A0A0A0" stroke-width="1"/>
<path d="M456.3 489.5h2.4" stroke="#121212" stroke-width="1"/>
<path d="M464.8 489.5h2.3" stroke="#121212" stroke-width="1"/>
<path d="M331.2 490.5h2.7" stroke="#9C9C9C" stroke-width="1"/>
<path d="M464.7 490.5h2.4" stroke="#9C9C9C" stroke-width="1"/>
<path d="M326.7 492.5h2.0" stroke="#A8A8A8" stroke-width="1"/>
<path d="M330.8 492.5h2.4" stroke="#A0A0A0" stroke-width="1"/>
<path d="M333.4 492.5h2.2" stroke="#A0A0A0" stroke-width="1"/>
<path d="M333.8 492.5h3.7" stroke="#121212" stroke-width="1"/>
<path d="M466.5 492.5h2.0" stroke="#A8A8A8" stroke-width="1"/>
<path d="M458.7 492.5h1.8" stroke="#A0A0A0" stroke-width="1"/>
<path d="M460.1 492.5h2.1" stroke="#A0A0A0" stroke-width="1"/>
<path d="M457.3 492.5h4.6" stroke="#121212" stroke-width="1"/>
<path d="M328.7 494.5h2.0" stroke="#A8A8A8" stroke-width="1"/>
<path d="M335.3 495.5h1.6" stroke="#A0A0A0" stroke-width="1"/>
<path d="M332.7 495.5h2.0" stroke="#A0A0A0" stroke-width="1"/>
<path d="M333.4 494.5h3.1" stroke="#121212" stroke-width="1"/>
<path d="M464.5 494.5h2.0" stroke="#A8A8A8" stroke-width="1"/>
<path d="M460.5 495.5h1.7" stroke="#A0A0A0" stroke-width="1"/>
<path d="M455.2 495.5h1.5" stroke="#A0A0A0" stroke-width="1"/>
<path d="M457.4 494.5h2.5" stroke="#121212" stroke-width="1"/>
<path d="M330.9 496.5h2.0" stroke="#A8A8A8" stroke-width="1"/>
<path d="M337.9 498.5h1.9" stroke="#A0A0A0" stroke-width="1"/>
<path d="M339.3 498.5h2.2" stroke="#A0A0A0" stroke-width="1"/>
<path d="M336.0 496.5h4.2" stroke="#121212" stroke-width="1"/>
<path d="M462.3 496.5h2.0" stroke="#A8A8A8" stroke-width="1"/>
<path d="M458.0 498.5h2.2" stroke="#A0A0A0" stroke-width="1"/>
<path d="M454.3 498.5h1.5" stroke="#A0A0A0" stroke-width="1"/>
<path d="M452.9 496.5h4.0" stroke="#121212" stroke-width="1"/>
<path d="M453.8 496.5h3.4" stroke="#121212" stroke-width="1"/>
<path d="M335.8 498.5h1.5" stroke="#9C9C9C" stroke-width="1"/>
<path d="M459.6 498.5h2.9" stroke="#9C9C9C" stroke-width="1"/>
<path d="M333.2 499.5h2.0" stroke="#A8A8A8" stroke-width="1"/>
<path d="M336.5 500.5h2.5" stroke="#A0A0A0" stroke-width="1"/>
<path d="M341.7 500.5h1.7" stroke="#A0A0A0" stroke-width="1"/>
<path d="M343.2 499.5h4.0" stroke="#121212" stroke-width="1"/>
<path d="M338.8 499.5h3.9" stroke="#121212" stroke-width="1"/>
<path d="M460.0 499.5h2.0" stroke="#A8A8A8" stroke-width="1"/>
<path d="M453.1 500.5h2.4" stroke="#A0A0A0" stroke-width="1"/>
<path d="M456.6 500.5h1.7" stroke="#A0A0A0" stroke-width="1"/>
<path d="M454.8 499.5h4.8" stroke="#121212" stroke-width="1"/>
<path d="M339.4 500.5h1.4" stroke="#9C9C9C" stroke-width="1"/>
<path d="M456.7 500.5h2.1" stroke="#9C9C9C" stroke-width="1"/>
<path d="M335.7 502.5h2.0" stroke="#A8A8A8" stroke-width="1"/>
<path d="M343.5 502.5h1.9" stroke="#A0A0A0" stroke-width="1"/>
<path d="M342.9 502.5h1.6" stroke="#A0A0A0" stroke-width="1"/>
<path d="M340.0 502.5h4.5" stroke="#121212" stroke-width="1"/>
<path d="M338.9 502.5h2.2" stroke="#121212" stroke-width="1"/>
<path d="M457.5 502.5h2.0" stroke="#A8A8A8" stroke-width="1"/>
<path d="M454.3 502.5h1.7" stroke="#A0A0A0" stroke-width="1"/>
<path d="M454.4 502.5h2.4" stroke="#A0A0A0" stroke-width="1"/>
<path d="M445.4 502.5h3.4" stroke="#121212" stroke-width="1"/>
<path d="M338.9 502.5h2.5" stroke="#9C9C9C" stroke-width="1"/>
<path d="M450.6 502.5h2.2" stroke="#9C9C9C" stroke-width="1"/>
<path d="M338.4 504.5h2.0" stroke="#A8A8A8" stroke-width="1"/>
<path d="M346.8 505.5h2.1" stroke="#A0A0A0" stroke-width="1"/>
<path d="M345.9 505.5h2.4" stroke="#A0A0A0" stroke-width="1"/>
<path d="M346.3 504.5h2.1" stroke="#121212" stroke-width="1"/>
<path d="M454.8 504.5h2.0" stroke="#A8A8A8" stroke-width="1"/>
<path d="M445.2 505.5h1.7" stroke="#A0A0A0" stroke-width="1"/>
<path d="M452.5 505.5h1.8" stroke="#A0A0A0" stroke-width="1"/>
<path d="M451.0 504.5h3.1" stroke="#121212" stroke-width="1"/>
<path d="M342.5 505.5h1.0" stroke="#9C9C9C" stroke-width="1"/>
<path d="M449.5 505.5h1.6" stroke="#9C9C9C" stroke-width="1"/>
<path d="M341.4 506.5h2.0" stroke="#A8A8A8" stroke-width="1"/>
<path d="M350.0 508.5h1.9" stroke="#A0A0A0" stroke-width="1"/>
<path d="M349.2 508.5h1.6" stroke="#A0A0A0" stroke-width="1"/>
<path d="M346.9 506.5h2.6" stroke="#121212" stroke-width="1"/>
<path d="M344.4 506.5h4.7" stroke="#121212" stroke-width="1"/>
<path d="M451.8 506.5h2.0" stroke="#A8A8A8" stroke-width="1"/>
<path d="M446.9 508.5h1.5" stroke="#A0A0A0" stroke-width="1"/>
<path d="M446.5 508.5h2.3" stroke="#A0A0A0" stroke-width="1"/>
<path d="M440.6 506.5h4.6" stroke="#121212" stroke-width="1"/>
<path d="M344.5 509.5h2.0" stroke="#A8A8A8" stroke-width="1"/>
<path d="M353.2 510.5h2.4" stroke="#A0A0A0" stroke-width="1"/>
<path d="M352.6 510.5h1.9" stroke="#A0A0A0" stroke-width="1"/>
<path d="M352.8 509.5h4.0" stroke="#121212" stroke-width="1"/>
<path d="M448.7 509.5h2.0" stroke="#A8A8A8" stroke-width="1"/>
<path d="M441.1 510.5h2.2" stroke="#A0A0A0" stroke-width="1"/>
<path d="M445.3 510.5h2.1" stroke="#A0A0A0" stroke-width="1"/>
<path d="M437.2 509.5h4.6" stroke="#121212" stroke-width="1"/>
<path d="M444.0 509.5h4.5" stroke="#121212" stroke-width="1"/>
<path d="M348.1 512.5h2.0" stroke="#A8A8A8" stroke-width="1"/>
<path d="M352.7 512.5h1.6" stroke="#A0A0A0" stroke-width="1"/>
<path d="M354.6 512.5h1.9" stroke="#A0A0A0" stroke-width="1"/>
<path d="M351.2 512.5h2.9" stroke="#121212" stroke-width="1"/>
<path d="M445.1 512.5h2.0" stroke="#A8A8A8" stroke-width="1"/>
<path d="M439.1 512.5h2.2" stroke="#A0A0A0" stroke-width="1"/>
<path d="M435.9 512.5h2.2" stroke="#A0A0A0" stroke-width="1"/>
<path d="M435.0 512.5h3.4" stroke="#121212" stroke-width="1"/>
<path d="M351.9 514.5h2.0" stroke="#A8A8A8" stroke-width="1"/>
<path d="M359.5 515.5h2.4" stroke="#A0A0A0" stroke-width="1"/>
<path d="M357.5 515.5h1.9" stroke="#A0A0A0" stroke-width="1"/>
<path d="M363.5 514.5h4.2" stroke="#121212" stroke-width="1"/>
<path d="M441.3 514.5h2.0" stroke="#A8A8A8" stroke-width="1"/>
<path d="M433.5 515.5h2.0" stroke="#A0A0A0" stroke-width="1"/>
<path d="M433.1 515.5h2.0" stroke="#A0A0A0" stroke-width="1"/>
<path d="M428.5 514.5h3.8" stroke="#121212" stroke-width="1"/>
<path d="M356.3 516.5h2.0" stroke="#A8A8A8" stroke-width="1"/>
<path d="M361.2 518.5h2.1" stroke="#A0A0A0" stroke-width="1"/>
<path d="M365.8 518.5h1.5" stroke="#A0A0A0" stroke-width="1"/>
<path d="M362.8 516.5h2.3" stroke="#121212" stroke-width="1"/>
<path d="M436.9 516.5h2.0" stroke="#A8A8A8" stroke-width="1"/>
<path d="M434.6 518.5h2.0" stroke="#A0A0A0" stroke-width="1"/>
<path d="M433.4 518.5h2.2" stroke="#A0A0A0" stroke-width="1"/>
<path d="M429.0 516.5h2.3" stroke="#121212" stroke-width="1"/>
<path d="M426.7 516.5h3.2" stroke="#121212" stroke-width="1"/>
<path d="M364.2 518.5h2.6" stroke="#9C9C9C" stroke-width="1"/>
<path d="M432.3 518.5h2.4" stroke="#9C9C9C" stroke-width="1"/>
<path d="M361.4 519.5h2.0" stroke="#A8A8A8" stroke-width="1"/>
<path d="M370.5 520.5h2.4" stroke="#A0A0A0" stroke-width="1"/>
<path d="M369.2 520.5h2.4" stroke="#A0A0A0" stroke-width="1"/>
<path d="M369.9 519.5h2.3" stroke="#121212" stroke-width="1"/>
<path d="M431.8 519.5h2.0" stroke="#A8A8A8" stroke-width="1"/>
<path d="M426.0 520.5h2.0" stroke="#A0A0A0" stroke-width="1"/>
<path d="M426.6 520.5h1.7" stroke="#A0A0A0" stroke-width="1"/>
<path d="M426.0 519.5h3.3" stroke="#121212" stroke-width="1"/>
<path d="M368.1 520.5h1.5" stroke="#9C9C9C" stroke-width="1"/>
<path d="M427.4 520.5h1.2" stroke="#9C9C9C" stroke-width="1"/>
<path d="M367.4 522.5h2.0" stroke="#A8A8A8" stroke-width="1"/>
<path d="M369.7 522.5h1.9" stroke="#A0A0A0" stroke-width="1"/>
<path d="M372.4 522.5h1.7" stroke="#A0A0A0" stroke-width="1"/>
<path d="M375.4 522.5h3.3" stroke="#121212" stroke-width="1"/>
<path d="M425.8 522.5h2.0" stroke="#A8A8A8" stroke-width="1"/>
<path d="M417.1 522.5h1.9" stroke="#A0A0A0" stroke-width="1"/>
<path d="M423.3 522.5h1.8" stroke="#A0A0A0" stroke-width="1"/>
<path d="M414.3 522.5h3.5" stroke="#121212" stroke-width="1"/>
<path d="M375.9 522.5h2.4" stroke="#9C9C9C" stroke-width="1"/>
<path d="M417.5 522.5h2.2" stroke="#9C9C9C" stroke-width="1"/>
<path d="M375.2 524.5h2.0" stroke="#A8A8A8" stroke-width="1"/>
<path d="M379.4 525.5h2.0" stroke="#A0A0A0" stroke-width="1"/>
<path d="M384.1 525.5h2.0" stroke="#A0A0A0" stroke-width="1"/>
<path d="M382.1 524.5h2.3" stroke="#121212" stroke-width="1"/>
<path d="M418.0 524.5h2.0" stroke="#A8A8A8" stroke-width="1"/>
<path d="M411.7 525.5h2.0" stroke="#A0A0A0" stroke-width="1"/>
<path d="M411.0 525.5h2.1" stroke="#A0A0A0" stroke-width="1"/>
<path d="M410.9 524.5h3.3" stroke="#121212" stroke-width="1"/>
<path d="M413.6 524.5h3.3" stroke="#121212" stroke-width="1"/>
<path d="M361.5 401.5h5.0" stroke="#101010" stroke-width="1"/>
<path d="M414.4 363.5h4.2" stroke="#101010" stroke-width="1"/>
<path d="M319.7 453.5h3.4" stroke="#101010" stroke-width="1"/>
<path d="M389.5 360.5h3.7" stroke="#101010" stroke-width="1"/>
<path d="M433.6 429.5h6.3" stroke="#101010" stroke-width="1"/>
<path d="M461.2 451.5h6.2" stroke="#101010" stroke-width="1"/>
<path d="M337.6 422.5h3.6" stroke="#101010" stroke-width="1"/>
<path d="M420.8 350.5h6.4" stroke="#101010" stroke-width="1"/>
<path d="M373.5 484.5h6.7" stroke="#101010" stroke-width="1"/>
<path d="M328.8 477.5h5.6" stroke="#101010" stroke-width="1"/>
<path d="M389.7 383.5h2.9" stroke="#101010" stroke-width="1"/>
<path d="M381.2 513.5h4.0" stroke="#101010" stroke-width="1"/>
<path d="M352.1 451.5h4.2" stroke="#101010" stroke-width="1"/>
<path d="M418.7 418.5h3.4" stroke="#101010" stroke-width="1"/>
<path d="M427.2 376.5h4.5" stroke="#101010" stroke-width="1"/>
<path d="M412.7 428.5h6.5" stroke="#101010" stroke-width="1"/>
<path d="M449.4 389.5h3.7" stroke="#101010" stroke-width="1"/>
<path d="M418.4 360.5h6.7" stroke="#101010" stroke-width="1"/>
<path d="M355.4 433.5h2.2" stroke="#101010" stroke-width="1"/>
<path d="M451.2 372.5h4.3" stroke="#101010" stroke-width="1"/>
<path d="M362.6 377.5h2.3" stroke="#101010" stroke-width="1"/>
<path d="M460.0 484.5h3.3" stroke="#101010" stroke-width="1"/>
<path d="M336.1 382.5h2.3" stroke="#101010" stroke-width="1"/>
<path d="M337.2 471.5h4.5" stroke="#101010" stroke-width="1"/>
<path d="M440.3 474.5h6.6" stroke="#101010" stroke-width="1"/>
<path d="M425.0 380.5h6.0" stroke="#101010" stroke-width="1"/>
<path d="M436.0 382.5h8.0" stroke="#101010" stroke-width="1"/>
<path d="M447.0 379.5h5.0" stroke="#101010" stroke-width="1"/>
<path d="M455.0 383.5h7.0" stroke="#101010" stroke-width="1"/>
<path d="M330.0 399.5h6.0" stroke="#101010" stroke-width="1"/>
<path d="M340.0 402.5h5.0" stroke="#101010" stroke-width="1"/>
<path d="M318.0 470.5h8.0" stroke="#101010" stroke-width="1"/>
<path d="M330.0 472.5h5.0" stroke="#101010" stroke-width="1"/>
<path d="M440.0 466.5h7.0" stroke="#101010" stroke-width="1"/>
<path d="M452.0 470.5h6.0" stroke="#101010" stroke-width="1"/>
<path d="M360.0 446.5h5.0" stroke="#101010" stroke-width="1"/>
<path d="M420.0 343.5h6.0" stroke="#101010" stroke-width="1"/>
<path d="M455.0 350.5h7.0" stroke="#101010" stroke-width="1"/>
<ellipse cx="433.5" cy="346" rx="4.8" ry="4.3" fill="#7C7C7C" stroke="#B0B0B0" stroke-width="1.1" stroke-dasharray="1.8 1.1"/>
<path d="M432.3 345.5h2.6" stroke="#C8C8C8" stroke-width="1"/>
<path d="M430.9 343.5h2.0" stroke="#C8C8C8" stroke-width="1"/>
<path d="M431.8 344.5h1.7" stroke="#C8C8C8" stroke-width="1"/>
<path d="M431.2 345.5h3.0" stroke="#101010" stroke-width="1"/>
<ellipse cx="423" cy="356.7" rx="4.8" ry="4.3" fill="#7C7C7C" stroke="#B0B0B0" stroke-width="1.1" stroke-dasharray="1.8 1.1"/>
<path d="M423.8 357.5h3.2" stroke="#C8C8C8" stroke-width="1"/>
<path d="M422.7 357.5h2.1" stroke="#C8C8C8" stroke-width="1"/>
<path d="M421.0 356.5h2.8" stroke="#C8C8C8" stroke-width="1"/>
<path d="M422.6 358.5h3.0" stroke="#101010" stroke-width="1"/>
<ellipse cx="411" cy="371" rx="4.8" ry="4.3" fill="#7C7C7C" stroke="#B0B0B0" stroke-width="1.1" stroke-dasharray="1.8 1.1"/>
<path d="M408.5 369.5h1.5" stroke="#C8C8C8" stroke-width="1"/>
<path d="M409.9 369.5h1.5" stroke="#C8C8C8" stroke-width="1"/>
<path d="M408.5 369.5h1.9" stroke="#C8C8C8" stroke-width="1"/>
<path d="M410.0 371.5h3.0" stroke="#101010" stroke-width="1"/>
<ellipse cx="401.8" cy="381" rx="4.8" ry="4.3" fill="#7C7C7C" stroke="#B0B0B0" stroke-width="1.1" stroke-dasharray="1.8 1.1"/>
<path d="M399.2 382.5h1.9" stroke="#C8C8C8" stroke-width="1"/>
<path d="M402.4 379.5h2.7" stroke="#C8C8C8" stroke-width="1"/>
<path d="M401.3 382.5h2.5" stroke="#C8C8C8" stroke-width="1"/>
<path d="M401.4 382.5h3.0" stroke="#101010" stroke-width="1"/>
<ellipse cx="397.5" cy="394.6" rx="4.8" ry="4.3" fill="#7C7C7C" stroke="#B0B0B0" stroke-width="1.1" stroke-dasharray="1.8 1.1"/>
<path d="M397.0 392.5h1.9" stroke="#C8C8C8" stroke-width="1"/>
<path d="M395.8 395.5h1.7" stroke="#C8C8C8" stroke-width="1"/>
<path d="M397.2 394.5h2.5" stroke="#C8C8C8" stroke-width="1"/>
<path d="M396.1 396.5h3.0" stroke="#101010" stroke-width="1"/>
<ellipse cx="417" cy="404" rx="4.8" ry="4.3" fill="#7C7C7C" stroke="#B0B0B0" stroke-width="1.1" stroke-dasharray="1.8 1.1"/>
<path d="M414.5 404.5h2.7" stroke="#C8C8C8" stroke-width="1"/>
<path d="M416.3 403.5h2.1" stroke="#C8C8C8" stroke-width="1"/>
<path d="M415.4 405.5h2.8" stroke="#C8C8C8" stroke-width="1"/>
<path d="M414.4 404.5h3.0" stroke="#101010" stroke-width="1"/>
<ellipse cx="331.7" cy="392.6" rx="4.8" ry="4.3" fill="#7C7C7C" stroke="#B0B0B0" stroke-width="1.1" stroke-dasharray="1.8 1.1"/>
<path d="M330.5 391.5h1.7" stroke="#C8C8C8" stroke-width="1"/>
<path d="M332.3 390.5h2.5" stroke="#C8C8C8" stroke-width="1"/>
<path d="M329.2 390.5h2.0" stroke="#C8C8C8" stroke-width="1"/>
<path d="M329.2 392.5h3.0" stroke="#101010" stroke-width="1"/>
<ellipse cx="341" cy="403.8" rx="4.8" ry="4.3" fill="#7C7C7C" stroke="#B0B0B0" stroke-width="1.1" stroke-dasharray="1.8 1.1"/>
<path d="M341.5 401.5h2.2" stroke="#C8C8C8" stroke-width="1"/>
<path d="M340.5 405.5h1.5" stroke="#C8C8C8" stroke-width="1"/>
<path d="M338.1 402.5h3.3" stroke="#C8C8C8" stroke-width="1"/>
<path d="M339.3 403.5h3.0" stroke="#101010" stroke-width="1"/>
<ellipse cx="350" cy="418.7" rx="4.8" ry="4.3" fill="#7C7C7C" stroke="#B0B0B0" stroke-width="1.1" stroke-dasharray="1.8 1.1"/>
<path d="M348.4 419.5h1.8" stroke="#C8C8C8" stroke-width="1"/>
<path d="M349.3 420.5h2.5" stroke="#C8C8C8" stroke-width="1"/>
<path d="M348.7 420.5h3.4" stroke="#C8C8C8" stroke-width="1"/>
<path d="M348.8 417.5h3.0" stroke="#101010" stroke-width="1"/>
<ellipse cx="359.6" cy="435.5" rx="4.8" ry="4.3" fill="#7C7C7C" stroke="#B0B0B0" stroke-width="1.1" stroke-dasharray="1.8 1.1"/>
<path d="M358.1 436.5h2.2" stroke="#C8C8C8" stroke-width="1"/>
<path d="M359.0 435.5h2.7" stroke="#C8C8C8" stroke-width="1"/>
<path d="M358.7 437.5h3.4" stroke="#C8C8C8" stroke-width="1"/>
<path d="M358.7 436.5h3.0" stroke="#101010" stroke-width="1"/>
<ellipse cx="380" cy="444.8" rx="4.8" ry="4.3" fill="#7C7C7C" stroke="#B0B0B0" stroke-width="1.1" stroke-dasharray="1.8 1.1"/>
<path d="M379.5 443.5h2.7" stroke="#C8C8C8" stroke-width="1"/>
<path d="M379.1 442.5h3.0" stroke="#C8C8C8" stroke-width="1"/>
<path d="M377.1 445.5h2.5" stroke="#C8C8C8" stroke-width="1"/>
<path d="M379.2 446.5h3.0" stroke="#101010" stroke-width="1"/>
<ellipse cx="395" cy="452" rx="4.8" ry="4.3" fill="#7C7C7C" stroke="#B0B0B0" stroke-width="1.1" stroke-dasharray="1.8 1.1"/>
<path d="M393.3 455.5h2.4" stroke="#C8C8C8" stroke-width="1"/>
<path d="M393.8 455.5h2.1" stroke="#C8C8C8" stroke-width="1"/>
<path d="M394.6 455.5h1.7" stroke="#C8C8C8" stroke-width="1"/>
<path d="M394.3 453.5h3.0" stroke="#101010" stroke-width="1"/>
<ellipse cx="411.7" cy="452" rx="4.8" ry="4.3" fill="#7C7C7C" stroke="#B0B0B0" stroke-width="1.1" stroke-dasharray="1.8 1.1"/>
<path d="M410.4 454.5h3.2" stroke="#C8C8C8" stroke-width="1"/>
<path d="M408.4 452.5h2.7" stroke="#C8C8C8" stroke-width="1"/>
<path d="M411.2 455.5h3.1" stroke="#C8C8C8" stroke-width="1"/>
<path d="M411.2 450.5h3.0" stroke="#101010" stroke-width="1"/>
<ellipse cx="428.5" cy="416.8" rx="4.8" ry="4.3" fill="#7C7C7C" stroke="#B0B0B0" stroke-width="1.1" stroke-dasharray="1.8 1.1"/>
<path d="M426.6 419.5h3.4" stroke="#C8C8C8" stroke-width="1"/>
<path d="M428.3 416.5h3.0" stroke="#C8C8C8" stroke-width="1"/>
<path d="M427.2 418.5h2.8" stroke="#C8C8C8" stroke-width="1"/>
<path d="M428.1 418.5h3.0" stroke="#101010" stroke-width="1"/>
<ellipse cx="447" cy="424" rx="4.8" ry="4.3" fill="#7C7C7C" stroke="#B0B0B0" stroke-width="1.1" stroke-dasharray="1.8 1.1"/>
<path d="M447.9 424.5h2.5" stroke="#C8C8C8" stroke-width="1"/>
<path d="M446.3 424.5h1.6" stroke="#C8C8C8" stroke-width="1"/>
<path d="M447.8 423.5h2.5" stroke="#C8C8C8" stroke-width="1"/>
<path d="M444.1 423.5h3.0" stroke="#101010" stroke-width="1"/>
<ellipse cx="452.7" cy="439" rx="4.8" ry="4.3" fill="#7C7C7C" stroke="#B0B0B0" stroke-width="1.1" stroke-dasharray="1.8 1.1"/>
<path d="M453.3 438.5h2.1" stroke="#C8C8C8" stroke-width="1"/>
<path d="M452.8 437.5h2.8" stroke="#C8C8C8" stroke-width="1"/>
<path d="M451.5 441.5h2.5" stroke="#C8C8C8" stroke-width="1"/>
<path d="M450.7 438.5h3.0" stroke="#101010" stroke-width="1"/>
<ellipse cx="463.9" cy="457.8" rx="4.8" ry="4.3" fill="#7C7C7C" stroke="#B0B0B0" stroke-width="1.1" stroke-dasharray="1.8 1.1"/>
<path d="M461.7 455.5h1.7" stroke="#C8C8C8" stroke-width="1"/>
<path d="M460.6 457.5h3.0" stroke="#C8C8C8" stroke-width="1"/>
<path d="M464.6 457.5h2.0" stroke="#C8C8C8" stroke-width="1"/>
<path d="M461.8 458.5h3.0" stroke="#101010" stroke-width="1"/>
<ellipse cx="471.3" cy="467" rx="4.8" ry="4.3" fill="#7C7C7C" stroke="#B0B0B0" stroke-width="1.1" stroke-dasharray="1.8 1.1"/>
<path d="M469.7 465.5h2.5" stroke="#C8C8C8" stroke-width="1"/>
<path d="M468.6 465.5h3.1" stroke="#C8C8C8" stroke-width="1"/>
<path d="M467.8 467.5h3.0" stroke="#C8C8C8" stroke-width="1"/>
<path d="M469.9 468.5h3.0" stroke="#101010" stroke-width="1"/>
<ellipse cx="406" cy="474.6" rx="4.8" ry="4.3" fill="#7C7C7C" stroke="#B0B0B0" stroke-width="1.1" stroke-dasharray="1.8 1.1"/>
<path d="M403.6 477.5h1.6" stroke="#C8C8C8" stroke-width="1"/>
<path d="M406.5 474.5h1.5" stroke="#C8C8C8" stroke-width="1"/>
<path d="M403.3 478.5h2.9" stroke="#C8C8C8" stroke-width="1"/>
<path d="M405.2 476.5h3.0" stroke="#101010" stroke-width="1"/>
<ellipse cx="395" cy="487.6" rx="4.8" ry="4.3" fill="#7C7C7C" stroke="#B0B0B0" stroke-width="1.1" stroke-dasharray="1.8 1.1"/>
<path d="M391.0 486.5h2.4" stroke="#C8C8C8" stroke-width="1"/>
<path d="M395.5 490.5h1.8" stroke="#C8C8C8" stroke-width="1"/>
<path d="M395.9 488.5h2.1" stroke="#C8C8C8" stroke-width="1"/>
<path d="M392.2 487.5h3.0" stroke="#101010" stroke-width="1"/>
<ellipse cx="383.8" cy="500.6" rx="4.8" ry="4.3" fill="#7C7C7C" stroke="#B0B0B0" stroke-width="1.1" stroke-dasharray="1.8 1.1"/>
<path d="M382.4 500.5h2.1" stroke="#C8C8C8" stroke-width="1"/>
<path d="M384.5 500.5h2.1" stroke="#C8C8C8" stroke-width="1"/>
<path d="M383.7 499.5h2.3" stroke="#C8C8C8" stroke-width="1"/>
<path d="M381.1 500.5h3.0" stroke="#101010" stroke-width="1"/>
<ellipse cx="372.6" cy="511.8" rx="4.8" ry="4.3" fill="#7C7C7C" stroke="#B0B0B0" stroke-width="1.1" stroke-dasharray="1.8 1.1"/>
<path d="M373.6 513.5h2.5" stroke="#C8C8C8" stroke-width="1"/>
<path d="M372.0 513.5h2.5" stroke="#C8C8C8" stroke-width="1"/>
<path d="M370.4 510.5h1.6" stroke="#C8C8C8" stroke-width="1"/>
<path d="M370.0 511.5h3.0" stroke="#101010" stroke-width="1"/>
<ellipse cx="400.6" cy="427" rx="17" ry="17.5" fill="none" stroke="#A8A8A8" stroke-width="1" stroke-dasharray="1.5 1.5"/>
<path d="M389.0 413.5h8.0" stroke="#0A0A0A" stroke-width="1"/>
<path d="M400.0 411.5h7.0" stroke="#0A0A0A" stroke-width="1"/>
<path d="M385.0 419.5h9.0" stroke="#0A0A0A" stroke-width="1"/>
<path d="M388.0 433.5h12.0" stroke="#0A0A0A" stroke-width="1"/>
<path d="M404.0 431.5h8.0" stroke="#0A0A0A" stroke-width="1"/>
<path d="M410.0 419.5h6.0" stroke="#0A0A0A" stroke-width="1"/>
<path d="M395.0 425.5h6.0" stroke="#0A0A0A" stroke-width="1"/>
<path d="M407.0 437.5h5.0" stroke="#0A0A0A" stroke-width="1"/>
<path d="M390.0 440.5h7.0" stroke="#0A0A0A" stroke-width="1"/>
<g fill="none" stroke="#C8C8C8" stroke-width="1">
<path d="M400.6 301C405 296 415 293 423 292.5L451 291C465 291.5 485 293.5 494 296.7C499 300 500 304 499.4 308C499 314 498 318 496.5 320.7C492 325 485 327 479.6 327.7L451.4 329.8L430 329C425 328.5 422 327.5 420.4 326.3" stroke-width="1.6"/>
<path d="M490.9 295V309.5M493 309.5C493 315 492 319 489 323"/>
<path d="M402 306.6C410 308 420 309.4 430.3 309.4L465.5 310L496.5 309.4M420 312.5L497 312"/>
<path d="M428.8 292.5V309.5M441.5 291.8V309.5M454.2 291.2V310M465.5 291.3V310M478.2 292.4V310M490.9 294.8V309.5"/>
<path d="M428.8 309.5L441.5 292M441.5 309.5L454.2 291.3M454.2 310L465.5 291.3M465.5 310L478.2 292.5M478.2 310L490.9 294.5"/>
<path d="M403 306L404.3 296L405.5 307L406.8 296L408.0 307L409.3 296L410.5 307L411.8 296L413.0 307L414.3 296L415.5 307L416.8 296L418.0 307L419.3 296L420.5 307L421.8 296L423.0 307L424.3 296L425.5 307L426.8 296L428.0 307"/>
<path d="M416.0 312.5L422.5 320.5L416.0 328.5M422.5 312.5L416.0 320.5L422.5 328.5"/>
<path d="M422.5 312.5L429.0 320.5L422.5 328.5M429.0 312.5L422.5 320.5L429.0 328.5"/>
<path d="M429.0 312.5L435.5 320.5L429.0 328.5M435.5 312.5L429.0 320.5L435.5 328.5"/>
<path d="M435.5 312.5L442.0 320.5L435.5 328.5M442.0 312.5L435.5 320.5L442.0 328.5"/>
<path d="M442.0 312.5L448.5 320.5L442.0 328.5M448.5 312.5L442.0 320.5L448.5 328.5"/>
<path d="M448.5 312.5L455.0 320.5L448.5 328.5M455.0 312.5L448.5 320.5L455.0 328.5"/>
<path d="M455.0 312.5L461.5 320.5L455.0 328.5M461.5 312.5L455.0 320.5L461.5 328.5"/>
<path d="M461.5 312.5L468.0 320.5L461.5 328.5M468.0 312.5L461.5 320.5L468.0 328.5"/>
<path d="M468.0 312.5L474.5 320.5L468.0 328.5M474.5 312.5L468.0 320.5L474.5 328.5"/>
<path d="M418 320.5H472M471 311L478 325M482.4 311L486.7 323.5M476 312V327M490 311V322"/>
</g>
<g fill="none" stroke="#ABABAB" stroke-width="1">
<path d="M342.7 264.7L379.7 262.8L392.4 267.7L393.4 276.4L380.7 284.2L340.7 279.4Z"/>
<path d="M341.5 279.4V304M350.5 281V303M378.5 284V303M381 284V303M392.5 276V300"/>
<path d="M343 265L350 282"/>
<path d="M347 265L354 282"/>
<path d="M351 265L358 282"/>
<path d="M355 265L362 282"/>
<path d="M359 265L366 282"/>
<path d="M363 265L370 282"/>
<path d="M367 265L374 282"/>
<path d="M371 265L378 282"/>
<path d="M375 265L382 282"/>
<path d="M379 265L386 282"/>
<path d="M383 265L390 282"/>
<path d="M345 267L342 276"/>
<path d="M352 267L349 276"/>
<path d="M359 267L356 276"/>
<path d="M366 267L363 276"/>
<path d="M373 267L370 276"/>
<path d="M375 264L391 276M372 270L383 266M380 272L390 270M344 287L352 282M342 293L350 300M383 288L392 284M382 296L391 291"/>
<path d="M352 284L365 300M372 300L378 290"/>
<path d="M321 307L335 298L350 296M321.5 307V352M326.5 310V350M321 307L340 330M330 300L345 318M321 330L340 320M321 340L338 345M332 308L346 300M323 318L337 310M324 350L338 338"/>
<path d="M346.5 290V352M349.5 290V352"/>
<path d="M316.5 353V378.5H322M316.5 353H338M318 379L330 372"/>
<path d="M342 322L352 334L364 324L374 336L384 326L392 334M344 330L356 326L370 332L382 330M352 320L345 331M364 319L357 333"/>
</g>
<path d="M341.2 296V352" stroke="#8C8C8C" stroke-width="4"/>
<path d="M343.8 306.5L353 305.4L387.7 303L399 304L415.4 307.7L421 317L418.8 326L406 332L392 329.6L380.8 323.8L364.6 321.5L350.8 322.7L343.8 321.5Z" fill="#A0A0A0"/>
<path d="M352 312.5L366 314M380 318.5L395 316M360 319.5L372 320" fill="none" stroke="#7A7A7A" stroke-width="1" stroke-dasharray="1.5 2"/>
<g fill="none" stroke="#A0A0A0" stroke-width="1">
<path d="M353.6 332.7l-2.2 3.0"/>
<path d="M355.9 334.5l-4.6 1.9"/>
<path d="M369.2 325.0l4.9 0.0"/>
<path d="M372.9 322.2l-3.3 1.5"/>
<path d="M356.7 321.7l-6.7 0.0"/>
<path d="M386.3 331.5l4.6 0.3"/>
<path d="M368.9 323.0l-4.8 0.4"/>
<path d="M353.1 334.9l7.1 1.8"/>
<path d="M366.8 330.4l2.6 2.9"/>
<path d="M354.6 321.6l-3.8 1.0"/>
<path d="M381.9 324.5l-7.4 0.4"/>
<path d="M380.7 334.0l-1.7 3.9"/>
<path d="M351.6 329.1l-3.4 1.2"/>
<path d="M388.5 336.1l1.4 2.8"/>
<path d="M366.8 327.6l-4.9 0.0"/>
<path d="M347.2 322.6l-5.0 3.7"/>
<path d="M368.8 329.4l-1.1 4.0"/>
<path d="M356.2 331.4l-1.1 3.6"/>
<path d="M354.3 323.9l3.5 4.1"/>
<path d="M361.9 331.2l2.0 1.7"/>
<path d="M349.0 334.8l-3.7 1.9"/>
<path d="M377.4 332.5l-7.4 1.5"/>
<path d="M364.7 337.8l-5.9 0.4"/>
<path d="M386.6 329.3l1.6 2.3"/>
<path d="M386.3 323.8l6.9 0.9"/>
<path d="M381.6 329.2l-2.8 1.0"/>
<path d="M357.9 325.9l1.0 2.2"/>
<path d="M349.2 326.7l-7.5 1.5"/>
<path d="M380.3 329.1l5.5 3.3"/>
<path d="M370.2 333.4l4.0 0.2"/>
<path d="M384.6 334.5l-5.6 1.3"/>
<path d="M365.6 330.9l-4.0 1.2"/>
<path d="M370.6 325.7l-2.3 1.2"/>
<path d="M377.5 337.2l6.0 0.3"/>
<path d="M375.6 335.5l-1.1 2.5"/>
<path d="M364.7 337.3l-3.5 0.6"/>
<path d="M350.4 322.6l5.2 0.2"/>
<path d="M352.5 335.7l-1.7 1.9"/>
<path d="M370.8 326.5l0.1 2.5"/>
<path d="M353.6 324.1l2.5 3.6"/>
</g>
<path d="M382 150L380.5 163Q375 178 369.5 192L369 236" fill="none" stroke="#6A6A6A" stroke-width="6.5"/>
<path d="M359.2 236Q359.2 234.2 361 234.2H377Q379 234.2 379 236V267H359.2Z" fill="#B4B4B4"/>
<rect x="363" y="240" width="1" height="4" fill="#1A1A1A"/>
<rect x="366" y="243" width="1" height="5" fill="#1A1A1A"/>
<rect x="370" y="239" width="1" height="3" fill="#1A1A1A"/>
<rect x="373" y="241" width="1" height="6" fill="#1A1A1A"/>
<rect x="376" y="245" width="1" height="4" fill="#1A1A1A"/>
<rect x="364" y="248" width="2" height="1" fill="#1A1A1A"/>
<rect x="371" y="248" width="2" height="2" fill="#1A1A1A"/>
<rect x="377" y="251" width="1" height="8" fill="#1A1A1A"/>
<rect x="364" y="265" width="1" height="2" fill="#1A1A1A"/>
<rect x="367" y="265" width="1" height="2" fill="#1A1A1A"/>
<rect x="370" y="265" width="1" height="2" fill="#1A1A1A"/>
<circle cx="368.5" cy="256" r="4" fill="none" stroke="#9A9A9A" stroke-width="1.5"/><circle cx="368.5" cy="256" r="1" fill="#202020"/>
<rect x="366" y="275.5" width="5" height="4.8" fill="#E878F0"/>
<rect x="366" y="283.3" width="5" height="2.9" fill="#E878F0"/>
<rect x="366" y="288" width="5" height="4.0" fill="#E878F0"/>
<rect x="366" y="294" width="5" height="4.0" fill="#E878F0"/>
<rect x="366" y="300" width="5" height="3.7" fill="#E878F0"/>
<path d="M368.5 275V304" stroke="#F8C0F8" stroke-width="1"/>
<g fill="none" stroke="#88F088" stroke-width="1.3">
<path d="M321.7 374.6V355.5H338.7M324.4 357V373.5M334.7 361V378.5M358.5 359.9H367.9V377.3H334.7M347.7 372L365.6 360.3"/>
</g>
<path d="M340 362V377M344 367L352 363" stroke="#C8C8C8" stroke-width="1" stroke-dasharray="1.5 1.5" fill="none"/>
<path d="M44 486C47 474 52 468 57 468C62 468 69 474 72.4 486Z" fill="#767670" opacity="0.75"/>
<path d="M62.8 456V487" stroke="#1430D8" stroke-width="3.6"/>
<path d="M62.8 458V470" stroke="#2848F8" stroke-width="1.5" opacity="0.8"/>
<path d="M31.5 489.5C35 488 40 486.8 46 487L61 488.5L46 492C40 492.5 35 491.5 31.5 489.5Z" fill="#D81818"/>
<path d="M63 488L70 487.5C74 488.5 77 490.5 79.5 494L72 495.5C68 493 65 490.5 63 488Z" fill="#18B020"/>
<g fill="none" stroke="#F0F0F0" stroke-width="1.2">
<path d="M59.5 442H66.5L59.5 454H66.5"/>
<path d="M21 486L28.5 498.5M28.5 486L21 498.5"/>
<path d="M80 490.5L83.5 496.5L87 490.5M83.5 496.5V503.5"/>
</g>
</svg><!--/VP-->
<!-- status bar -->
<div class="a" style="left:4px;top:540px;width:772px;height:1px;background:#B4B2A4"></div>
<div class="a" style="left:4px;top:541px;width:20px;height:18px;background:linear-gradient(to right,#F0F4F0 0,#F0F4F0 1px,#C4CCC4 1px,#C4CCC4 5px,#D8B8B0 5px,#D8B8B0 8px,#B8C4D4 8px,#B8C4D4 10px,#C8C8BC 10px,#C0C0B8 17px,#E0E0D8 17px)"></div>
<div class="a" style="left:4px;top:559px;width:772px;height:1px;background:#D0DCF8"></div>
<div class="a sep" style="left:24px"></div>
<div class="a sep" style="left:125px"></div>
<div class="a sep" style="left:195px"></div>
<div class="a sep" style="left:262px"></div>
<div class="a sep" style="left:337px"></div>
<div class="a sep" style="left:415px"></div>
<div class="a sep" style="left:494px"></div>
<div class="a sep" style="left:540px"></div>
<div class="a sep" style="left:588px"></div>
<div class="a sep" style="left:612px"></div>
<div class="a sep" style="left:633px"></div>
<div class="a sep" style="left:701px"></div>
<div class="a sep" style="left:756px"></div>
<div class="a sb" style="left:29px">Rotate</div>
<div class="a sb" style="left:199px">S = 0.76553</div>
<div class="a sb" style="left:265px">XC: 3.9928</div>
<div class="a sb" style="left:343px">YC: 1.0182</div>
<div class="a sb" style="left:420px">ZC: 0.0000</div>
<div class="a sb" style="left:498px">CP=DV</div>
<div class="a sb" style="left:544px">DV=0</div>
<div class="a sb" style="left:592px">IN</div>
<div class="a sb" style="left:616px">3D</div>
<div class="a sb" style="left:636px">D = 0</div>
<div class="a sb" style="left:705px">Pos Snap</div>
<svg class="a" style="left:763px;top:548px" width="13" height="11" viewBox="0 0 13 11">
<g fill="#FFFFFF"><rect x="10" y="2" width="2" height="2"/><rect x="7" y="5" width="2" height="2"/><rect x="10" y="5" width="2" height="2"/><rect x="4" y="8" width="2" height="2"/><rect x="7" y="8" width="2" height="2"/><rect x="10" y="8" width="2" height="2"/></g>
<g fill="#B8B4A0"><rect x="9" y="1" width="2" height="2"/><rect x="6" y="4" width="2" height="2"/><rect x="9" y="4" width="2" height="2"/><rect x="3" y="7" width="2" height="2"/><rect x="6" y="7" width="2" height="2"/><rect x="9" y="7" width="2" height="2"/></g>
</svg>
</body></html>
